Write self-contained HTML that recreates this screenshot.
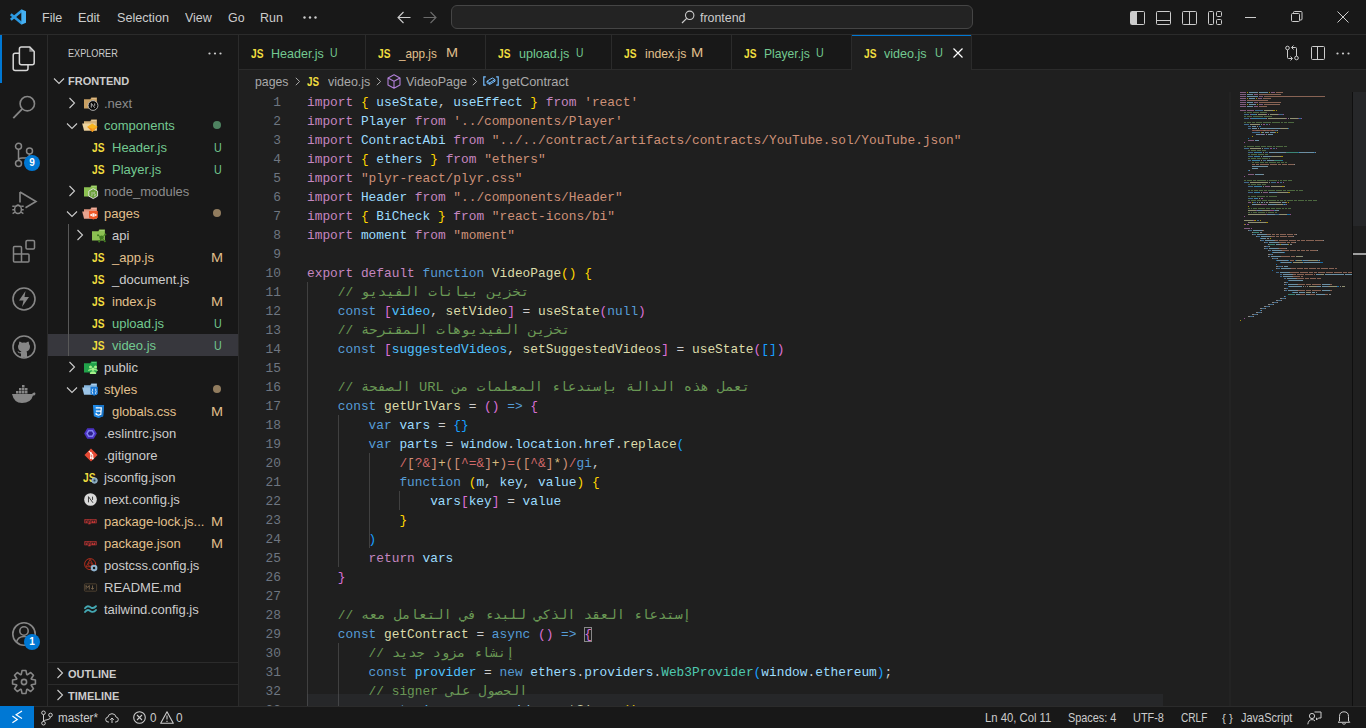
<!DOCTYPE html><html><head><meta charset="utf-8"><style>
*{margin:0;padding:0;box-sizing:border-box}
html,body{width:1366px;height:728px;overflow:hidden;background:#181818;font-family:"Liberation Sans",sans-serif;font-size:13px;color:#cccccc}
.a{position:absolute}
svg{position:absolute;overflow:visible}
.menu{position:absolute;top:10px;font-size:13px;color:#cccccc;white-space:nowrap}
.tab{position:absolute;top:0;height:35px;border-right:1px solid #2b2b2b;border-bottom:1px solid #2b2b2b;background:#181818}
.js{position:absolute;font-weight:bold;font-size:11px;color:#cbcb41;font-family:"Liberation Sans",sans-serif;letter-spacing:-0.2px}
.lbl{position:absolute;top:10px;font-size:13px;white-space:nowrap}
.st{position:absolute;top:4px;font-size:12px;color:#cccccc;white-space:nowrap}
.row{position:absolute;left:0;width:190px;height:22px}
.t{position:absolute;top:4px;white-space:nowrap;font-size:13px}
.g{color:#73c991}.m{color:#e2c08d}.d{color:#8c8c8c}
.code{position:absolute;left:68px;top:23px;font-family:"Liberation Mono",monospace;font-size:12.83px;line-height:19px;white-space:pre;color:#cccccc}
.ln{position:absolute;left:0;top:23px;width:42px;text-align:right;font-family:"Liberation Mono",monospace;font-size:12.83px;line-height:19px;color:#6e7681;white-space:pre}
.k{color:#c586c0}.s{color:#569cd6}.v{color:#9cdcfe}.c{color:#4fc1ff}.f{color:#dcdcaa}.str{color:#ce9178}.cm{color:#6a9955}.y{color:#ffd700}.p{color:#da70d6}.b{color:#179fff}.re{color:#d16969}.cl{color:#4ec9b0}.o{color:#cccccc}
</style></head><body><div class="a" style="left:0;top:0;width:1366px;height:35px;background:#181818;border-bottom:1px solid #2b2b2b"><svg style="left:10px;top:9px" width="16" height="16" viewBox="0 0 16 16"><path d="M12.83 2.6 L11.17 0.6 L-0.03 9.8 L1.63 11.8 Z" fill="#2f9de4"/><path d="M12.83 13.4 L11.17 15.4 L-0.03 6.2 L1.63 4.2 Z" fill="#2b98e0"/><path d="M11.3 0.2 L16 2.3 V13.7 L11.3 15.8 Z" fill="#45b0f2"/></svg><div style="position:absolute;left:42.44px;top:10px;font-size:13px;color:#cccccc;font-weight:normal;white-space:nowrap;transform-origin:0 0;transform:scaleX(0.9636);">File</div><div style="position:absolute;left:77.82px;top:10px;font-size:13px;color:#cccccc;font-weight:normal;white-space:nowrap;transform-origin:0 0;transform:scaleX(0.9776);">Edit</div><div style="position:absolute;left:116.50px;top:10px;font-size:13px;color:#cccccc;font-weight:normal;white-space:nowrap;transform-origin:0 0;transform:scaleX(0.9709);">Selection</div><div style="position:absolute;left:184.60px;top:10px;font-size:13px;color:#cccccc;font-weight:normal;white-space:nowrap;transform-origin:0 0;transform:scaleX(0.9596);">View</div><div style="position:absolute;left:227.80px;top:10px;font-size:13px;color:#cccccc;font-weight:normal;white-space:nowrap;transform-origin:0 0;transform:scaleX(0.9526);">Go</div><div style="position:absolute;left:259.84px;top:10px;font-size:13px;color:#cccccc;font-weight:normal;white-space:nowrap;transform-origin:0 0;transform:scaleX(0.9594);">Run</div><svg style="left:303px;top:16px" width="14" height="3"><circle cx="1.5" cy="1.5" r="1.2" fill="#cccccc"/><circle cx="7" cy="1.5" r="1.2" fill="#cccccc"/><circle cx="12.5" cy="1.5" r="1.2" fill="#cccccc"/></svg><svg style="left:397px;top:11px" width="14" height="13" viewBox="0 0 14 13"><path d="M6.5 1 L1 6.5 L6.5 12 M1 6.5 H13.5" stroke="#cccccc" stroke-width="1.1" fill="none"/></svg><svg style="left:423px;top:11px" width="14" height="13" viewBox="0 0 14 13"><path d="M7.5 1 L13 6.5 L7.5 12 M13 6.5 H0.5" stroke="#6b6b6b" stroke-width="1.1" fill="none"/></svg><div class="a" style="left:451px;top:5px;width:522px;height:24px;border:1px solid #454545;border-radius:6px;background:#232323"></div><svg style="left:681px;top:10px" width="14" height="14" viewBox="0 0 14 14"><circle cx="8.7" cy="5.3" r="4.2" stroke="#cccccc" stroke-width="1.1" fill="none"/><path d="M5.7 8.3 L1 13" stroke="#cccccc" stroke-width="1.2"/></svg><div style="position:absolute;left:700.40px;top:10px;font-size:13px;color:#cccccc;font-weight:normal;white-space:nowrap;transform-origin:0 0;transform:scaleX(0.9542);">frontend</div><svg style="left:1130px;top:10px" width="16" height="16" viewBox="0 0 16 16"><rect x="0.5" y="1.5" width="14" height="13" rx="1" stroke="#cccccc" fill="none"/><rect x="1" y="2" width="6" height="12" fill="#cccccc"/></svg><svg style="left:1156px;top:10px" width="16" height="16" viewBox="0 0 16 16"><rect x="0.5" y="1.5" width="14" height="13" rx="1" stroke="#cccccc" fill="none"/><path d="M1 10.5 H14" stroke="#cccccc"/></svg><svg style="left:1182px;top:10px" width="16" height="16" viewBox="0 0 16 16"><rect x="0.5" y="1.5" width="14" height="13" rx="1" stroke="#cccccc" fill="none"/><path d="M7.5 2 V14" stroke="#cccccc"/></svg><svg style="left:1208px;top:10px" width="16" height="16" viewBox="0 0 16 16"><rect x="0.5" y="1.5" width="5" height="13" rx="1" stroke="#cccccc" fill="none"/><rect x="8.5" y="1.5" width="5" height="5" rx="1" stroke="#cccccc" fill="none"/><rect x="8.5" y="9.5" width="5" height="5" rx="1" stroke="#cccccc" fill="none"/></svg><div class="a" style="left:1245px;top:17px;width:11px;height:1px;background:#cccccc"></div><svg style="left:1291px;top:11px" width="12" height="12" viewBox="0 0 12 12"><rect x="0.5" y="2.5" width="8" height="8" rx="1" stroke="#cccccc" fill="none"/><path d="M2.5 2.5 V1.5 Q2.5 0.5 3.5 0.5 H10 Q11 0.5 11 1.5 V8 Q11 9 10 9 H9" stroke="#cccccc" fill="none"/></svg><svg style="left:1337px;top:11px" width="12" height="12" viewBox="0 0 12 12"><path d="M0.5 0.5 L11.5 11.5 M11.5 0.5 L0.5 11.5" stroke="#cccccc" stroke-width="1"/></svg></div><div class="a" style="left:0;top:35px;width:48px;height:671px;background:#181818;border-right:1px solid #2b2b2b"><div class="a" style="left:0;top:0;width:2px;height:48px;background:#0078d4"></div><svg style="left:12px;top:10px" width="24" height="28" viewBox="0 0 24 28"><path d="M7.4 8.2 H3.2 Q1.2 8.2 1.2 10.2 V23.6 Q1.2 25.6 3.2 25.6 H14 Q16 25.6 16 23.6 V19.8" stroke="#d7d7d7" stroke-width="1.5" fill="none"/><path d="M9.4 1.9 H17.6 L22.2 6.5 V17.8 Q22.2 19.8 20.2 19.8 H9.4 Q7.4 19.8 7.4 17.8 V3.9 Q7.4 1.9 9.4 1.9 Z" stroke="#d7d7d7" stroke-width="1.5" fill="none" stroke-linejoin="round"/><path d="M17.4 2.2 V6.7 H21.9 Z" fill="#d7d7d7" opacity="0.6"/></svg><svg style="left:12px;top:60px" width="24" height="24" viewBox="0 0 24 24"><circle cx="15.3" cy="8.7" r="7.2" stroke="#868686" stroke-width="1.6" fill="none"/><path d="M10.3 13.8 L1.3 23.2" stroke="#868686" stroke-width="1.8"/></svg><svg style="left:12px;top:108px" width="24" height="24" viewBox="0 0 24 24"><circle cx="6.5" cy="3.3" r="3" stroke="#868686" stroke-width="1.5" fill="none"/><circle cx="6.5" cy="20.5" r="3" stroke="#868686" stroke-width="1.5" fill="none"/><circle cx="17.5" cy="8" r="3" stroke="#868686" stroke-width="1.5" fill="none"/><path d="M6.5 6.3 V17.5 M17.5 11 Q17.5 15 13 15 H10 Q6.5 15 6.5 17.5" stroke="#868686" stroke-width="1.5" fill="none"/></svg><div class="a" style="left:24px;top:120px;width:16px;height:16px;border-radius:8px;background:#0078d4;color:#fff;font-size:10px;font-weight:bold;text-align:center;line-height:16px">9</div><svg style="left:12px;top:156px" width="24" height="24" viewBox="0 0 24 24"><path d="M8 1 V11.5 M8 1 L24 10.5 L13.5 16.8" stroke="#868686" stroke-width="1.6" fill="none" stroke-linejoin="miter"/><ellipse cx="6" cy="18.6" rx="3.4" ry="4" stroke="#868686" stroke-width="1.5" fill="none"/><path d="M3.6 15.2 Q6 12.6 8.4 15.2 M0.3 15.3 H2.8 M0.3 18.8 H2.6 M0.6 22.6 L2.9 21.2 M9.2 15.3 H11.7 M9.4 18.8 H11.7 M9.1 21.2 L11.4 22.6" stroke="#868686" stroke-width="1.4" fill="none"/></svg><svg style="left:12px;top:204px" width="24" height="24" viewBox="0 0 24 24"><path d="M2.5 7.5 H8.5 Q9.5 7.5 9.5 8.5 V15 H16 Q17 15 17 16 V22 Q17 23 16 23 H2.5 Q1.5 23 1.5 22 V8.5 Q1.5 7.5 2.5 7.5 Z M1.5 15 H9.5 V23" stroke="#868686" stroke-width="1.5" fill="none"/><rect x="14" y="1.5" width="8.5" height="8.5" rx="1.2" stroke="#868686" stroke-width="1.5" fill="none"/></svg><svg style="left:12px;top:252px" width="24" height="24" viewBox="0 0 24 24"><circle cx="12" cy="12" r="11" stroke="#868686" stroke-width="1.6" fill="none"/><path d="M13.5 4 L7 13.5 H11.5 L10 20 L17 10 H12.5 Z" fill="#868686"/></svg><svg style="left:12px;top:300px" width="24" height="24" viewBox="0 0 24 24"><circle cx="12" cy="12" r="11" stroke="#868686" stroke-width="1.6" fill="none"/><path d="M9 22 V18.5 Q6 18.5 5.5 16 Q7 16.5 7.8 17.5 Q8.5 17 9.5 16.5 Q6 15.5 6 11.5 Q6 10 7 9 Q6.8 7.5 7.5 6.5 Q9 6.8 10 7.7 Q12 7.2 14 7.7 Q15 6.8 16.5 6.5 Q17.2 7.5 17 9 Q18 10 18 11.5 Q18 15.5 14.5 16.5 Q15 17 15 18.5 V22 Z" fill="#868686"/></svg><svg style="left:11px;top:350px" width="26" height="20" viewBox="0 0 26 20"><path d="M1 9 H21 Q22 7 24 7.5 Q25 8.5 24 10 Q23 10.5 22 10.5 Q20 18 11 18 Q3 18 1 9 Z" fill="#868686"/><rect x="5" y="6" width="2.5" height="2.5" fill="#868686"/><rect x="8" y="6" width="2.5" height="2.5" fill="#868686"/><rect x="11" y="6" width="2.5" height="2.5" fill="#868686"/><rect x="14" y="6" width="2.5" height="2.5" fill="#868686"/><rect x="8" y="3" width="2.5" height="2.5" fill="#868686"/><rect x="11" y="3" width="2.5" height="2.5" fill="#868686"/><rect x="14" y="3" width="2.5" height="2.5" fill="#868686"/><rect x="11" y="0" width="2.5" height="2.5" fill="#868686"/></svg><svg style="left:12px;top:587px" width="24" height="24" viewBox="0 0 24 24"><circle cx="12" cy="12" r="11.2" stroke="#868686" stroke-width="1.6" fill="none"/><circle cx="12" cy="9" r="4.2" stroke="#868686" stroke-width="1.6" fill="none"/><path d="M4.5 20 Q6 14.5 12 14.5 Q18 14.5 19.5 20" stroke="#868686" stroke-width="1.6" fill="none"/></svg><div class="a" style="left:24px;top:599px;width:16px;height:16px;border-radius:8px;background:#0078d4;color:#fff;font-size:10px;font-weight:bold;text-align:center;line-height:16px">1</div><svg style="left:12px;top:635px" width="24" height="24" viewBox="0 0 24 24"><path d="M23.43 10.04 L23.43 13.96 L19.39 14.78 L19.20 15.26 L21.47 18.70 L18.70 21.47 L15.26 19.20 L14.78 19.39 L13.96 23.43 L10.04 23.43 L9.22 19.39 L8.74 19.20 L5.30 21.47 L2.53 18.70 L4.80 15.26 L4.61 14.78 L0.57 13.96 L0.57 10.04 L4.61 9.22 L4.80 8.74 L2.53 5.30 L5.30 2.53 L8.74 4.80 L9.22 4.61 L10.04 0.57 L13.96 0.57 L14.78 4.61 L15.26 4.80 L18.70 2.53 L21.47 5.30 L19.20 8.74 L19.39 9.22 Z" stroke="#868686" stroke-width="1.6" fill="none" stroke-linejoin="round"/><circle cx="12" cy="12" r="2.6" stroke="#868686" stroke-width="1.6" fill="none"/></svg></div><div class="a" style="left:48px;top:35px;width:191px;height:671px;background:#181818;border-right:1px solid #2b2b2b"><div style="position:absolute;left:20.20px;top:12px;font-size:11px;color:#cccccc;font-weight:normal;white-space:nowrap;transform-origin:0 0;transform:scaleX(0.8305);">EXPLORER</div><svg style="left:160px;top:17px" width="14" height="3"><circle cx="1.5" cy="1.5" r="1.1" fill="#cccccc"/><circle cx="7" cy="1.5" r="1.1" fill="#cccccc"/><circle cx="12.5" cy="1.5" r="1.1" fill="#cccccc"/></svg><div class="a" style="left:0;top:299px;width:190px;height:22px;background:#37373d"></div><div class="a" style="left:20px;top:189px;width:1px;height:132px;background:#585858"></div><svg style="left:5px;top:42px" width="12" height="8" viewBox="0 0 12 8"><path d="M1 1.5 L6 6.5 L11 1.5" stroke="#cccccc" stroke-width="1.1" fill="none"/></svg><div class="t" style="left:20px;top:40px;font-weight:bold;font-size:11px;color:#cccccc">FRONTEND</div><svg style="left:20px;top:62px" width="8" height="12" viewBox="0 0 8 12"><path d="M1.5 1 L6.5 6 L1.5 11" stroke="#cccccc" stroke-width="1.1" fill="none"/></svg><svg style="left:36px;top:60px" width="16" height="16" viewBox="0 0 16 16"><path d="M0 4.3 H6.3 L7.3 2.5 H12.9 V13.6 H0 Z" fill="#c9a063"/><path d="M7.6 3.6 H12.4" stroke="#e2c08d" stroke-width="0.9"/><circle cx="9" cy="10.5" r="4.9" fill="#0a0a0a" stroke="#cfcfcf" stroke-width="0.8"/><path d="M7.3 12.6 V8.4 L10.8 12.8 M10.7 8.4 V10.8" stroke="#bdbdbd" stroke-width="0.9" fill="none"/></svg><div class="t d" style="left:56px;top:61px">.next</div><svg style="left:18px;top:87px" width="12" height="8" viewBox="0 0 12 8"><path d="M1 1.5 L6 6.5 L11 1.5" stroke="#cccccc" stroke-width="1.1" fill="none"/></svg><svg style="left:36px;top:82px" width="16" height="16" viewBox="0 0 16 16"><path d="M0 4.3 H6.3 L7.3 2.5 H12.9 V13.6 H0 Z" fill="#d4b27a"/><path d="M7.6 3.6 H12.4" stroke="#ead3a6" stroke-width="0.9"/><path d="M-1.8 6.6 H11.2 L12.9 13.6 H0 Z" fill="#ecd3a0"/><path d="M8.2 6.6 L13.6 9.8 L8.4 15 L3.2 9.8 Z" fill="#f6b51e"/><path d="M3.2 9.8 L8.4 15 L8.2 11.8 Z" fill="#f08a1d"/><path d="M8.2 11.8 L13.6 9.8 L8.4 15 Z" fill="#f39b22"/></svg><div class="t g" style="left:56px;top:83px">components</div><div class="a" style="left:165px;top:86px;width:8px;height:8px;border-radius:4px;background:#73c991;opacity:0.6"></div><div style="position:absolute;left:44.00px;top:106px;font-size:12.5px;color:#f1dd3f;font-weight:bold;white-space:nowrap;transform-origin:0 0;transform:scaleX(0.8226);">JS</div><div class="t g" style="left:64px;top:105px">Header.js</div><div style="position:absolute;left:166.30px;top:105.5px;font-size:12.5px;color:#73c991;font-weight:normal;white-space:nowrap;transform-origin:0 0;transform:scaleX(0.8556);">U</div><div style="position:absolute;left:44.00px;top:128px;font-size:12.5px;color:#f1dd3f;font-weight:bold;white-space:nowrap;transform-origin:0 0;transform:scaleX(0.8226);">JS</div><div class="t g" style="left:64px;top:127px">Player.js</div><div style="position:absolute;left:166.30px;top:127.5px;font-size:12.5px;color:#73c991;font-weight:normal;white-space:nowrap;transform-origin:0 0;transform:scaleX(0.8556);">U</div><svg style="left:20px;top:150px" width="8" height="12" viewBox="0 0 8 12"><path d="M1.5 1 L6.5 6 L1.5 11" stroke="#cccccc" stroke-width="1.1" fill="none"/></svg><svg style="left:36px;top:148px" width="16" height="16" viewBox="0 0 16 16"><path d="M0 4.3 H6.3 L7.3 2.5 H12.9 V13.6 H0 Z" fill="#8cc152"/><path d="M7.6 3.6 H12.4" stroke="#a9d47a" stroke-width="0.9"/><path d="M9.2 5.6 L13.6 8.1 V13.1 L9.2 15.6 L4.8 13.1 V8.1 Z" fill="#6a9f3a" stroke="#e6e6e6" stroke-width="0.9"/><path d="M8 9 V12.3 Q8 13 7.3 13 M10.8 9.2 Q9.6 9 9.6 10 Q9.6 10.8 10.6 11 Q11.6 11.2 11.4 12.2 Q11.2 13 10 12.8" stroke="#e6e6e6" stroke-width="0.6" fill="none"/></svg><div class="t d" style="left:56px;top:149px">node_modules</div><svg style="left:18px;top:175px" width="12" height="8" viewBox="0 0 12 8"><path d="M1 1.5 L6 6.5 L11 1.5" stroke="#cccccc" stroke-width="1.1" fill="none"/></svg><svg style="left:36px;top:170px" width="16" height="16" viewBox="0 0 16 16"><path d="M0 4.3 H6.3 L7.3 2.5 H12.9 V13.6 H0 Z" fill="#e0957f"/><path d="M7.6 3.6 H12.4" stroke="#f0b6a4" stroke-width="0.9"/><path d="M-1.8 6.6 H11.2 L12.9 13.6 H0 Z" fill="#e8a48f"/><path d="M5 6 H13.8 V12.8 L9.4 14.6 L5 12.8 Z" fill="#ef5a2a"/><path d="M6.3 10 Q9.4 7.2 12.5 10 Q9.4 12.8 6.3 10 Z" stroke="#fff" stroke-width="0.9" fill="none"/><circle cx="9.4" cy="10" r="0.9" fill="#fff"/></svg><div class="t m" style="left:56px;top:171px">pages</div><div class="a" style="left:165px;top:174px;width:8px;height:8px;border-radius:4px;background:#e2c08d;opacity:0.6"></div><svg style="left:28px;top:194px" width="8" height="12" viewBox="0 0 8 12"><path d="M1.5 1 L6.5 6 L1.5 11" stroke="#cccccc" stroke-width="1.1" fill="none"/></svg><svg style="left:44px;top:192px" width="16" height="16" viewBox="0 0 16 16"><path d="M0 4.3 H6.3 L7.3 2.5 H12.9 V13.6 H0 Z" fill="#8cc152"/><path d="M7.6 3.6 H12.4" stroke="#a9d47a" stroke-width="0.9"/><circle cx="9.6" cy="10.6" r="2.2" fill="#3f7a1f"/><path d="M9.6 10.6 L6 8.2 M9.6 10.6 L13.4 7.4 M9.6 10.6 L12.8 14.2 M9.6 10.6 L7.2 14.6" stroke="#3f7a1f" stroke-width="1"/><circle cx="13.4" cy="7.4" r="1" fill="#3f7a1f"/><circle cx="12.8" cy="14.2" r="1" fill="#3f7a1f"/><circle cx="7.2" cy="14.6" r="1" fill="#3f7a1f"/><circle cx="6" cy="8.2" r="1" fill="#3f7a1f"/></svg><div class="t " style="left:64px;top:193px">api</div><div style="position:absolute;left:44.00px;top:216px;font-size:12.5px;color:#f1dd3f;font-weight:bold;white-space:nowrap;transform-origin:0 0;transform:scaleX(0.8226);">JS</div><div class="t m" style="left:64px;top:215px">_app.js</div><div style="position:absolute;left:162.74px;top:215.5px;font-size:12.5px;color:#e2c08d;font-weight:normal;white-space:nowrap;transform-origin:0 0;transform:scaleX(1.1556);">M</div><div style="position:absolute;left:44.00px;top:238px;font-size:12.5px;color:#f1dd3f;font-weight:bold;white-space:nowrap;transform-origin:0 0;transform:scaleX(0.8226);">JS</div><div class="t " style="left:64px;top:237px">_document.js</div><div style="position:absolute;left:44.00px;top:260px;font-size:12.5px;color:#f1dd3f;font-weight:bold;white-space:nowrap;transform-origin:0 0;transform:scaleX(0.8226);">JS</div><div class="t m" style="left:64px;top:259px">index.js</div><div style="position:absolute;left:162.74px;top:259.5px;font-size:12.5px;color:#e2c08d;font-weight:normal;white-space:nowrap;transform-origin:0 0;transform:scaleX(1.1556);">M</div><div style="position:absolute;left:44.00px;top:282px;font-size:12.5px;color:#f1dd3f;font-weight:bold;white-space:nowrap;transform-origin:0 0;transform:scaleX(0.8226);">JS</div><div class="t g" style="left:64px;top:281px">upload.js</div><div style="position:absolute;left:166.30px;top:281.5px;font-size:12.5px;color:#73c991;font-weight:normal;white-space:nowrap;transform-origin:0 0;transform:scaleX(0.8556);">U</div><div style="position:absolute;left:44.00px;top:304px;font-size:12.5px;color:#f1dd3f;font-weight:bold;white-space:nowrap;transform-origin:0 0;transform:scaleX(0.8226);">JS</div><div class="t g" style="left:64px;top:303px">video.js</div><div style="position:absolute;left:166.30px;top:303.5px;font-size:12.5px;color:#73c991;font-weight:normal;white-space:nowrap;transform-origin:0 0;transform:scaleX(0.8556);">U</div><svg style="left:20px;top:326px" width="8" height="12" viewBox="0 0 8 12"><path d="M1.5 1 L6.5 6 L1.5 11" stroke="#cccccc" stroke-width="1.1" fill="none"/></svg><svg style="left:36px;top:324px" width="16" height="16" viewBox="0 0 16 16"><path d="M0 4.3 H6.3 L7.3 2.5 H12.9 V13.6 H0 Z" fill="#21a24a"/><path d="M7.6 3.6 H12.4" stroke="#5dc878" stroke-width="0.9"/><circle cx="6.5" cy="8" r="1.5" fill="#a5f08b"/><circle cx="11.5" cy="8" r="1.5" fill="#a5f08b"/><circle cx="9" cy="10.2" r="1.7" fill="#a5f08b"/><path d="M4 12 Q4 10 6.5 10 Q8 10 8 11 M14 12 Q14 10 11.5 10 Q10 10 10 11 M5.8 15 Q5.8 12.2 9 12.2 Q12.2 12.2 12.2 15 Z" fill="#a5f08b"/></svg><div class="t " style="left:56px;top:325px">public</div><svg style="left:18px;top:351px" width="12" height="8" viewBox="0 0 12 8"><path d="M1 1.5 L6 6.5 L11 1.5" stroke="#cccccc" stroke-width="1.1" fill="none"/></svg><svg style="left:36px;top:346px" width="16" height="16" viewBox="0 0 16 16"><path d="M0 4.3 H6.3 L7.3 2.5 H12.9 V13.6 H0 Z" fill="#86b6de"/><path d="M7.6 3.6 H12.4" stroke="#b5d3ec" stroke-width="0.9"/><path d="M-1.8 6.6 H11.2 L12.9 13.6 H0 Z" fill="#9cc4e6"/><path d="M6.5 5.8 H13.8 V13 L10.15 14.8 L6.5 13 Z" fill="#1c7ad6"/><path d="M9.2 7.8 Q8.5 7.8 8.5 8.6 V9.8 L8 10.3 L8.5 10.8 V12 Q8.5 12.8 9.2 12.8 M11.1 7.8 Q11.8 7.8 11.8 8.6 V9.8 L12.3 10.3 L11.8 10.8 V12 Q11.8 12.8 11.1 12.8" stroke="#fff" stroke-width="0.8" fill="none"/></svg><div class="t m" style="left:56px;top:347px">styles</div><div class="a" style="left:165px;top:350px;width:8px;height:8px;border-radius:4px;background:#e2c08d;opacity:0.6"></div><svg style="left:44px;top:369px" width="13" height="15" viewBox="0 0 14 16"><path d="M1 1 H13 L12 13 L7 15 L2 13 Z" fill="#1e88e5"/><path d="M7 1 H13 L12 13 L7 15 Z" fill="#1a75c8"/><path d="M4 4 H10 L9.5 11 L7 12 L4.5 11 L4.4 9.5 M4.2 7.5 H9.6" stroke="#fff" stroke-width="1.3" fill="none"/></svg><div class="t m" style="left:64px;top:369px">globals.css</div><div style="position:absolute;left:162.74px;top:369.5px;font-size:12.5px;color:#e2c08d;font-weight:normal;white-space:nowrap;transform-origin:0 0;transform:scaleX(1.1556);">M</div><svg style="left:36px;top:392px" width="13" height="13" viewBox="0 0 16 16"><path d="M4 1.5 H12 L15.8 8 L12 14.5 H4 L0.2 8 Z" fill="#4b32c3"/><path d="M5.3 3.8 H10.7 L13.3 8 L10.7 12.2 H5.3 L2.7 8 Z" fill="#8080f2"/><path d="M6.3 5.5 H9.7 L11.2 8 L9.7 10.5 H6.3 L4.8 8 Z" fill="#2c1f8a"/></svg><div class="t " style="left:56px;top:391px">.eslintrc.json</div><svg style="left:36px;top:413px" width="14" height="14" viewBox="0 0 16 16"><path d="M8 0.5 L15.5 8 L8 15.5 L0.5 8 Z" fill="#e64a35"/><path d="M5.5 3.5 L10 8 V12 M7.8 5.8 V11.5" stroke="#fff" stroke-width="1.2" fill="none"/><circle cx="10" cy="12" r="1.1" fill="#fff"/><circle cx="7.8" cy="11.5" r="1.1" fill="#fff"/><circle cx="7.8" cy="5.8" r="1.1" fill="#fff"/></svg><div class="t " style="left:56px;top:413px">.gitignore</div><div style="position:absolute;left:35.00px;top:436px;font-size:12.5px;color:#f1dd3f;font-weight:bold;white-space:nowrap;transform-origin:0 0;transform:scaleX(0.8226);">JS</div><svg style="left:43px;top:442px" width="7" height="7"><circle cx="3.5" cy="3.5" r="2.8" fill="#7aa0b8" stroke="#a8c3d6" stroke-width="0.8"/><circle cx="3.5" cy="3.5" r="1" fill="#2a3b47"/></svg><div class="t " style="left:56px;top:435px">jsconfig.json</div><svg style="left:36px;top:458px" width="13" height="13" viewBox="0 0 16 16"><circle cx="8" cy="8" r="7.8" fill="#d9d9d9"/><path d="M5.5 11.5 V4.5 L11 12 M10.5 4.5 V8.5" stroke="#3a3a3a" stroke-width="1.2" fill="none"/></svg><div class="t " style="left:56px;top:457px">next.config.js</div><svg style="left:36px;top:480px" width="13" height="13" viewBox="0 0 16 16"><path d="M0.5 5.3 H15.5 V10.3 H8 V11.5 H5 V10.3 H0.5 Z" fill="#cb3837"/><path d="M2 6.5 V9.5 M2 6.5 H4 V9.5 M5.7 6.5 V10.5 M5.7 6.5 H7.5 V9.5 M9 6.5 V9.5 M9 6.5 H14 V9.5 M11.5 6.5 V9" stroke="#181818" stroke-width="0.9" fill="none"/></svg><div class="t m" style="left:56px;top:479px">package-lock.js...</div><div style="position:absolute;left:162.74px;top:479.5px;font-size:12.5px;color:#e2c08d;font-weight:normal;white-space:nowrap;transform-origin:0 0;transform:scaleX(1.1556);">M</div><svg style="left:36px;top:502px" width="13" height="13" viewBox="0 0 16 16"><path d="M0.5 5.3 H15.5 V10.3 H8 V11.5 H5 V10.3 H0.5 Z" fill="#cb3837"/><path d="M2 6.5 V9.5 M2 6.5 H4 V9.5 M5.7 6.5 V10.5 M5.7 6.5 H7.5 V9.5 M9 6.5 V9.5 M9 6.5 H14 V9.5 M11.5 6.5 V9" stroke="#181818" stroke-width="0.9" fill="none"/></svg><div class="t m" style="left:56px;top:501px">package.json</div><div style="position:absolute;left:162.74px;top:501.5px;font-size:12.5px;color:#e2c08d;font-weight:normal;white-space:nowrap;transform-origin:0 0;transform:scaleX(1.1556);">M</div><svg style="left:36px;top:523px" width="14" height="14" viewBox="0 0 16 16"><circle cx="7" cy="7" r="6.3" stroke="#c8301e" stroke-width="1" fill="none"/><path d="M7 1.5 L11.5 10 H2.5 Z" stroke="#c8301e" stroke-width="0.9" fill="none"/><circle cx="7" cy="7.5" r="2" stroke="#c8301e" stroke-width="0.8" fill="none"/><circle cx="11.5" cy="11.5" r="3.8" fill="#8fb3cf"/><circle cx="11.5" cy="11.5" r="1.4" fill="#181818"/></svg><div class="t " style="left:56px;top:523px">postcss.config.js</div><svg style="left:36px;top:546px" width="13" height="13" viewBox="0 0 16 16"><rect x="0.5" y="3.5" width="15" height="9" rx="1" stroke="#5a4a35" fill="none"/><path d="M2.5 10.5 V5.5 L4.5 8 L6.5 5.5 V10.5 M10.5 5.5 V10 M8.8 8.5 L10.5 10.3 L12.2 8.5" stroke="#8a7355" stroke-width="1" fill="none"/></svg><div class="t " style="left:56px;top:545px">README.md</div><svg style="left:36px;top:569px" width="13" height="10" viewBox="0 0 13 10"><path d="M1 4.2 Q3 1.2 5.4 2.6 Q6.5 3.4 7.4 3.8 Q10 4.8 12 2.2 M1 8 Q3 5 5.4 6.4 Q6.5 7.2 7.4 7.6 Q10 8.6 12 6" stroke="#44a8b3" stroke-width="1.9" fill="none" stroke-linecap="round"/></svg><div class="t " style="left:56px;top:567px">tailwind.config.js</div><div class="a" style="left:0;top:627px;width:190px;height:1px;background:#2b2b2b"></div><div class="a" style="left:0;top:649px;width:190px;height:1px;background:#2b2b2b"></div><svg style="left:8px;top:632px" width="8" height="12" viewBox="0 0 8 12"><path d="M1.5 1 L6.5 6 L1.5 11" stroke="#cccccc" stroke-width="1.1" fill="none"/></svg><div class="t" style="left:20px;top:633px;font-weight:bold;font-size:11px">OUTLINE</div><svg style="left:8px;top:654px" width="8" height="12" viewBox="0 0 8 12"><path d="M1.5 1 L6.5 6 L1.5 11" stroke="#cccccc" stroke-width="1.1" fill="none"/></svg><div class="t" style="left:20px;top:655px;font-weight:bold;font-size:11px">TIMELINE</div></div><div class="a" style="left:239px;top:35px;width:1127px;height:35px;background:#181818;border-bottom:1px solid #2b2b2b"><div class="tab" style="left:0px;width:127px;background:#181818;border-bottom:1px solid #2b2b2b"><div style="position:absolute;left:11.90px;top:11.7px;font-size:12.5px;color:#f1dd3f;font-weight:bold;white-space:nowrap;transform-origin:0 0;transform:scaleX(0.8159);">JS</div><div style="position:absolute;left:31.74px;top:10.6px;font-size:13px;color:#73c991;font-weight:normal;white-space:nowrap;transform-origin:0 0;transform:scaleX(0.9629);">Header.js</div><div style="position:absolute;left:90.60px;top:10.6px;font-size:12.5px;color:#73c991;font-weight:normal;white-space:nowrap;transform-origin:0 0;transform:scaleX(0.8333);">U</div></div><div class="tab" style="left:127px;width:120px;background:#181818;border-bottom:1px solid #2b2b2b"><div style="position:absolute;left:12.00px;top:11.7px;font-size:12.5px;color:#f1dd3f;font-weight:bold;white-space:nowrap;transform-origin:0 0;transform:scaleX(0.8159);">JS</div><div style="position:absolute;left:32.70px;top:10.6px;font-size:13px;color:#e2c08d;font-weight:normal;white-space:nowrap;transform-origin:0 0;transform:scaleX(0.9028);">_app.js</div><div style="position:absolute;left:79.74px;top:10.6px;font-size:12.5px;color:#e2c08d;font-weight:normal;white-space:nowrap;transform-origin:0 0;transform:scaleX(1.1556);">M</div></div><div class="tab" style="left:247px;width:126px;background:#181818;border-bottom:1px solid #2b2b2b"><div style="position:absolute;left:11.90px;top:11.7px;font-size:12.5px;color:#f1dd3f;font-weight:bold;white-space:nowrap;transform-origin:0 0;transform:scaleX(0.8159);">JS</div><div style="position:absolute;left:32.90px;top:10.6px;font-size:13px;color:#73c991;font-weight:normal;white-space:nowrap;transform-origin:0 0;transform:scaleX(0.9688);">upload.js</div><div style="position:absolute;left:89.70px;top:10.6px;font-size:12.5px;color:#73c991;font-weight:normal;white-space:nowrap;transform-origin:0 0;transform:scaleX(0.8222);">U</div></div><div class="tab" style="left:373px;width:120px;background:#181818;border-bottom:1px solid #2b2b2b"><div style="position:absolute;left:11.80px;top:11.7px;font-size:12.5px;color:#f1dd3f;font-weight:bold;white-space:nowrap;transform-origin:0 0;transform:scaleX(0.8159);">JS</div><div style="position:absolute;left:32.60px;top:10.6px;font-size:13px;color:#e2c08d;font-weight:normal;white-space:nowrap;transform-origin:0 0;transform:scaleX(0.9377);">index.js</div><div style="position:absolute;left:79.42px;top:10.6px;font-size:12.5px;color:#e2c08d;font-weight:normal;white-space:nowrap;transform-origin:0 0;transform:scaleX(1.1778);">M</div></div><div class="tab" style="left:493px;width:120px;background:#181818;border-bottom:1px solid #2b2b2b"><div style="position:absolute;left:11.80px;top:11.7px;font-size:12.5px;color:#f1dd3f;font-weight:bold;white-space:nowrap;transform-origin:0 0;transform:scaleX(0.8159);">JS</div><div style="position:absolute;left:31.67px;top:10.6px;font-size:13px;color:#73c991;font-weight:normal;white-space:nowrap;transform-origin:0 0;transform:scaleX(0.9336);">Player.js</div><div style="position:absolute;left:83.50px;top:10.6px;font-size:12.5px;color:#73c991;font-weight:normal;white-space:nowrap;transform-origin:0 0;transform:scaleX(0.8556);">U</div></div><div class="tab" style="left:613px;width:120px;background:#1f1f1f;border-bottom:none"><div class="a" style="left:0;top:0;width:119px;height:1px;background:#0078d4"></div><div style="position:absolute;left:11.80px;top:11.7px;font-size:12.5px;color:#f1dd3f;font-weight:bold;white-space:nowrap;transform-origin:0 0;transform:scaleX(0.8159);">JS</div><div style="position:absolute;left:32.40px;top:10.6px;font-size:13px;color:#73c991;font-weight:normal;white-space:nowrap;transform-origin:0 0;transform:scaleX(0.9668);">video.js</div><div style="position:absolute;left:83.40px;top:10.6px;font-size:12.5px;color:#73c991;font-weight:normal;white-space:nowrap;transform-origin:0 0;transform:scaleX(0.8778);">U</div><svg style="left:100.5px;top:13px" width="10" height="10" viewBox="0 0 10 10"><path d="M0.5 0.5 L9.5 9.5 M9.5 0.5 L0.5 9.5" stroke="#ffffff" stroke-width="1.2"/></svg></div><svg style="left:1045px;top:10px" width="16" height="16" viewBox="0 0 16 16"><circle cx="3.5" cy="3" r="1.8" stroke="#cccccc" stroke-width="1" fill="none"/><circle cx="12.5" cy="13" r="1.8" stroke="#cccccc" stroke-width="1" fill="none"/><path d="M3.5 5 V12.5 Q3.5 13.5 4.5 13.5 H8 M6.5 11.5 L8.5 13.5 L6.5 15.5 M12.5 11 V3.5 Q12.5 2.5 11.5 2.5 H8 M9.5 0.5 L7.5 2.5 L9.5 4.5" stroke="#cccccc" stroke-width="1" fill="none"/></svg><svg style="left:1071px;top:10px" width="16" height="16" viewBox="0 0 16 16"><rect x="1.5" y="1.5" width="13" height="13" rx="1" stroke="#cccccc" fill="none"/><path d="M7.5 2 V14" stroke="#cccccc"/></svg><svg style="left:1097px;top:17px" width="14" height="3"><circle cx="1.5" cy="1.5" r="1.1" fill="#cccccc"/><circle cx="7" cy="1.5" r="1.1" fill="#cccccc"/><circle cx="12.5" cy="1.5" r="1.1" fill="#cccccc"/></svg></div><div class="a" style="left:239px;top:70px;width:1127px;height:636px;background:#1f1f1f;overflow:hidden"><div style="position:absolute;left:16.30px;top:4px;font-size:13px;color:#a9a9a9;font-weight:normal;white-space:nowrap;transform-origin:0 0;transform:scaleX(0.9438);">pages</div><svg style="left:56px;top:7px" width="6" height="9" viewBox="0 0 6 9"><path d="M0.8 0.8 L4.6 4.5 L0.8 8.2" stroke="#a9a9a9" stroke-width="1" fill="none"/></svg><div style="position:absolute;left:68.10px;top:5px;font-size:12.5px;color:#f1dd3f;font-weight:bold;white-space:nowrap;transform-origin:0 0;transform:scaleX(0.7892);">JS</div><div style="position:absolute;left:88.60px;top:4px;font-size:13px;color:#a9a9a9;font-weight:normal;white-space:nowrap;transform-origin:0 0;transform:scaleX(0.9601);">video.js</div><svg style="left:137px;top:7px" width="6" height="9" viewBox="0 0 6 9"><path d="M0.8 0.8 L4.6 4.5 L0.8 8.2" stroke="#a9a9a9" stroke-width="1" fill="none"/></svg><svg style="left:148px;top:4px" width="14" height="15" viewBox="0 0 14 15"><path d="M7 0.8 L13 4 V11 L7 14.2 L1 11 V4 Z M1 4 L7 7.3 L13 4 M7 7.3 V14.2" stroke="#b180d7" stroke-width="1.1" fill="none" stroke-linejoin="round"/></svg><div style="position:absolute;left:166.60px;top:4px;font-size:13px;color:#a9a9a9;font-weight:normal;white-space:nowrap;transform-origin:0 0;transform:scaleX(0.9613);">VideoPage</div><svg style="left:233px;top:7px" width="6" height="9" viewBox="0 0 6 9"><path d="M0.8 0.8 L4.6 4.5 L0.8 8.2" stroke="#a9a9a9" stroke-width="1" fill="none"/></svg><svg style="left:244px;top:6px" width="16" height="10" viewBox="0 0 16 10"><path d="M2.8 0.8 H0.8 V9.2 H2.8 M13.2 0.8 H15.2 V9.2 H13.2" stroke="#75beff" stroke-width="1.2" fill="none"/><path d="M4 5.2 L9.3 2 L12 3.6 V5.2 L6.7 8.4 L4 6.8 Z M4 5.2 L6.7 6.8 L12 3.6 M6.7 6.8 V8.4" stroke="#75beff" stroke-width="1" fill="none" stroke-linejoin="round"/></svg><div style="position:absolute;left:263.10px;top:4px;font-size:13px;color:#a9a9a9;font-weight:normal;white-space:nowrap;transform-origin:0 0;transform:scaleX(0.9898);">getContract</div><div class="a" style="left:68px;top:212px;width:1px;height:437px;background:#404040"></div><div class="a" style="left:99px;top:345px;width:1px;height:152px;background:#404040"></div><div class="a" style="left:130px;top:383px;width:1px;height:95px;background:#404040"></div><div class="a" style="left:160px;top:421px;width:1px;height:19px;background:#404040"></div><div class="a" style="left:99px;top:573px;width:1px;height:76px;background:#404040"></div><div class="ln">1
2
3
4
5
6
7
8
9
10
11
12
13
14
15
16
17
18
19
20
21
22
23
24
25
26
27
28
29
30
31
32
33</div><div class="code"><span class="k">import</span><span class="o"> </span><span class="y">{</span><span class="o"> </span><span class="v">useState</span><span class="o">, </span><span class="v">useEffect</span><span class="o"> </span><span class="y">}</span><span class="o"> </span><span class="k">from</span><span class="o"> </span><span class="str">&#x27;react&#x27;</span>
<span class="k">import</span><span class="o"> </span><span class="v">Player</span><span class="o"> </span><span class="k">from</span><span class="o"> </span><span class="str">&#x27;../components/Player&#x27;</span>
<span class="k">import</span><span class="o"> </span><span class="v">ContractAbi</span><span class="o"> </span><span class="k">from</span><span class="o"> </span><span class="str">&quot;../../contract/artifacts/contracts/YouTube.sol/YouTube.json&quot;</span>
<span class="k">import</span><span class="o"> </span><span class="y">{</span><span class="o"> </span><span class="v">ethers</span><span class="o"> </span><span class="y">}</span><span class="o"> </span><span class="k">from</span><span class="o"> </span><span class="str">&quot;ethers&quot;</span>
<span class="k">import</span><span class="o"> </span><span class="str">&quot;plyr-react/plyr.css&quot;</span>
<span class="k">import</span><span class="o"> </span><span class="v">Header</span><span class="o"> </span><span class="k">from</span><span class="o"> </span><span class="str">&quot;../components/Header&quot;</span>
<span class="k">import</span><span class="o"> </span><span class="y">{</span><span class="o"> </span><span class="v">BiCheck</span><span class="o"> </span><span class="y">}</span><span class="o"> </span><span class="k">from</span><span class="o"> </span><span class="str">&quot;react-icons/bi&quot;</span>
<span class="k">import</span><span class="o"> </span><span class="v">moment</span><span class="o"> </span><span class="k">from</span><span class="o"> </span><span class="str">&quot;moment&quot;</span>

<span class="k">export</span><span class="o"> </span><span class="k">default</span><span class="o"> </span><span class="s">function</span><span class="o"> </span><span class="f">VideoPage</span><span class="y">()</span><span class="o"> </span><span class="y">{</span>
<span class="o">    </span><span class="cm">// </span><span id="ar10" class="cm" style="display:inline-block;direction:rtl;transform-origin:0 0;transform:scaleX(1.0885)">تخزين بيانات الفيديو</span>
<span class="o">    </span><span class="s">const</span><span class="o"> </span><span class="p">[</span><span class="c">video</span><span class="o">, </span><span class="f">setVideo</span><span class="p">]</span><span class="o"> = </span><span class="f">useState</span><span class="p">(</span><span class="s">null</span><span class="p">)</span>
<span class="o">    </span><span class="cm">// </span><span id="ar12" class="cm" style="display:inline-block;direction:rtl;transform-origin:0 0;transform:scaleX(1.0832)">تخزين الفيديوهات المقترحة</span>
<span class="o">    </span><span class="s">const</span><span class="o"> </span><span class="p">[</span><span class="c">suggestedVideos</span><span class="o">, </span><span class="f">setSuggestedVideos</span><span class="p">]</span><span class="o"> = </span><span class="f">useState</span><span class="p">(</span><span class="b">[]</span><span class="p">)</span>

<span class="o">    </span><span class="cm">// </span><span id="ar15" class="cm" style="display:inline-block;direction:rtl;transform-origin:0 0;transform:scaleX(1.0726)">تعمل هذه الدالة بإستدعاء المعلمات من URL الصفحة</span>
<span class="o">    </span><span class="s">const</span><span class="o"> </span><span class="f">getUrlVars</span><span class="o"> = </span><span class="p">()</span><span class="o"> </span><span class="s">=&gt;</span><span class="o"> </span><span class="p">{</span>
<span class="o">        </span><span class="s">var</span><span class="o"> </span><span class="v">vars</span><span class="o"> = </span><span class="b">{}</span>
<span class="o">        </span><span class="s">var</span><span class="o"> </span><span class="v">parts</span><span class="o"> = </span><span class="v">window</span><span class="o">.</span><span class="v">location</span><span class="o">.</span><span class="v">href</span><span class="o">.</span><span class="f">replace</span><span class="b">(</span>
<span class="o">            </span><span class="re">/</span><span style="color:#ce9178">[</span><span class="re">?&amp;</span><span style="color:#ce9178">]</span><span style="color:#d7ba7d">+</span><span style="color:#ce9178">([</span><span class="re">^=&amp;</span><span style="color:#ce9178">]</span><span style="color:#d7ba7d">+</span><span style="color:#ce9178">)</span><span class="re">=</span><span style="color:#ce9178">([</span><span class="re">^&amp;</span><span style="color:#ce9178">]</span><span style="color:#d7ba7d">*</span><span style="color:#ce9178">)</span><span class="re">/</span><span class="s">gi</span><span class="o">,</span>
<span class="o">            </span><span class="s">function</span><span class="o"> </span><span class="y">(</span><span class="v">m</span><span class="o">, </span><span class="v">key</span><span class="o">, </span><span class="v">value</span><span class="y">)</span><span class="o"> </span><span class="y">{</span>
<span class="o">                </span><span class="v">vars</span><span class="p">[</span><span class="v">key</span><span class="p">]</span><span class="o"> = </span><span class="v">value</span>
<span class="o">            </span><span class="y">}</span>
<span class="o">        </span><span class="b">)</span>
<span class="o">        </span><span class="k">return</span><span class="o"> </span><span class="v">vars</span>
<span class="o">    </span><span class="p">}</span>

<span class="o">    </span><span class="cm">// </span><span id="ar27" class="cm" style="display:inline-block;direction:rtl;transform-origin:0 0;transform:scaleX(1.0690)">إستدعاء العقد الذكي للبدء في التعامل معه</span>
<span class="o">    </span><span class="s">const</span><span class="o"> </span><span class="f">getContract</span><span class="o"> = </span><span class="s">async</span><span class="o"> </span><span class="p">()</span><span class="o"> </span><span class="s">=&gt;</span><span class="o"> </span><span class="p" style="outline:1px solid #888;outline-offset:-1px">{</span>
<span class="o">        </span><span class="cm">// </span><span id="ar29" class="cm" style="display:inline-block;direction:rtl;transform-origin:0 0;transform:scaleX(1.0560)">إنشاء مزود جديد</span>
<span class="o">        </span><span class="s">const</span><span class="o"> </span><span class="c">provider</span><span class="o"> = </span><span class="s">new</span><span class="o"> </span><span class="v">ethers</span><span class="o">.</span><span class="v">providers</span><span class="o">.</span><span class="cl">Web3Provider</span><span class="b">(</span><span class="v">window</span><span class="o">.</span><span class="v">ethereum</span><span class="b">)</span><span class="o">;</span>
<span class="o">        </span><span class="cm">// signer </span><span id="ar31" class="cm" style="display:inline-block;direction:rtl;transform-origin:0 0;transform:scaleX(1.0544)">الحصول على</span>
<span class="o">        </span><span class="s">const</span><span class="o"> </span><span class="c">signer</span><span class="o"> = </span><span class="v">provider</span><span class="o">.</span><span class="f">getSigner</span><span class="y">()</span></div><div class="a" style="left:1001px;top:22px;width:112px;height:240px;opacity:0.6"><div style="position:absolute;left:0px;top:0px;width:6px;height:2px;background:linear-gradient(#c586c0 55%,transparent 55%)"></div><div style="position:absolute;left:7px;top:0px;width:1px;height:2px;background:linear-gradient(#ffd700 55%,transparent 55%)"></div><div style="position:absolute;left:9px;top:0px;width:8px;height:2px;background:linear-gradient(#9cdcfe 55%,transparent 55%)"></div><div style="position:absolute;left:17px;top:0px;width:1px;height:2px;background:linear-gradient(#cccccc 55%,transparent 55%)"></div><div style="position:absolute;left:19px;top:0px;width:9px;height:2px;background:linear-gradient(#9cdcfe 55%,transparent 55%)"></div><div style="position:absolute;left:29px;top:0px;width:1px;height:2px;background:linear-gradient(#ffd700 55%,transparent 55%)"></div><div style="position:absolute;left:31px;top:0px;width:4px;height:2px;background:linear-gradient(#c586c0 55%,transparent 55%)"></div><div style="position:absolute;left:36px;top:0px;width:7px;height:2px;background:linear-gradient(#ce9178 55%,transparent 55%)"></div><div style="position:absolute;left:0px;top:2px;width:6px;height:2px;background:linear-gradient(#c586c0 55%,transparent 55%)"></div><div style="position:absolute;left:7px;top:2px;width:6px;height:2px;background:linear-gradient(#9cdcfe 55%,transparent 55%)"></div><div style="position:absolute;left:14px;top:2px;width:4px;height:2px;background:linear-gradient(#c586c0 55%,transparent 55%)"></div><div style="position:absolute;left:19px;top:2px;width:22px;height:2px;background:linear-gradient(#ce9178 55%,transparent 55%)"></div><div style="position:absolute;left:0px;top:4px;width:6px;height:2px;background:linear-gradient(#c586c0 55%,transparent 55%)"></div><div style="position:absolute;left:7px;top:4px;width:11px;height:2px;background:linear-gradient(#9cdcfe 55%,transparent 55%)"></div><div style="position:absolute;left:19px;top:4px;width:4px;height:2px;background:linear-gradient(#c586c0 55%,transparent 55%)"></div><div style="position:absolute;left:24px;top:4px;width:61px;height:2px;background:linear-gradient(#ce9178 55%,transparent 55%)"></div><div style="position:absolute;left:0px;top:6px;width:6px;height:2px;background:linear-gradient(#c586c0 55%,transparent 55%)"></div><div style="position:absolute;left:7px;top:6px;width:1px;height:2px;background:linear-gradient(#ffd700 55%,transparent 55%)"></div><div style="position:absolute;left:9px;top:6px;width:6px;height:2px;background:linear-gradient(#9cdcfe 55%,transparent 55%)"></div><div style="position:absolute;left:16px;top:6px;width:1px;height:2px;background:linear-gradient(#ffd700 55%,transparent 55%)"></div><div style="position:absolute;left:18px;top:6px;width:4px;height:2px;background:linear-gradient(#c586c0 55%,transparent 55%)"></div><div style="position:absolute;left:23px;top:6px;width:8px;height:2px;background:linear-gradient(#ce9178 55%,transparent 55%)"></div><div style="position:absolute;left:0px;top:8px;width:6px;height:2px;background:linear-gradient(#c586c0 55%,transparent 55%)"></div><div style="position:absolute;left:7px;top:8px;width:21px;height:2px;background:linear-gradient(#ce9178 55%,transparent 55%)"></div><div style="position:absolute;left:0px;top:10px;width:6px;height:2px;background:linear-gradient(#c586c0 55%,transparent 55%)"></div><div style="position:absolute;left:7px;top:10px;width:6px;height:2px;background:linear-gradient(#9cdcfe 55%,transparent 55%)"></div><div style="position:absolute;left:14px;top:10px;width:4px;height:2px;background:linear-gradient(#c586c0 55%,transparent 55%)"></div><div style="position:absolute;left:19px;top:10px;width:22px;height:2px;background:linear-gradient(#ce9178 55%,transparent 55%)"></div><div style="position:absolute;left:0px;top:12px;width:6px;height:2px;background:linear-gradient(#c586c0 55%,transparent 55%)"></div><div style="position:absolute;left:7px;top:12px;width:1px;height:2px;background:linear-gradient(#ffd700 55%,transparent 55%)"></div><div style="position:absolute;left:9px;top:12px;width:7px;height:2px;background:linear-gradient(#9cdcfe 55%,transparent 55%)"></div><div style="position:absolute;left:17px;top:12px;width:1px;height:2px;background:linear-gradient(#ffd700 55%,transparent 55%)"></div><div style="position:absolute;left:19px;top:12px;width:4px;height:2px;background:linear-gradient(#c586c0 55%,transparent 55%)"></div><div style="position:absolute;left:24px;top:12px;width:16px;height:2px;background:linear-gradient(#ce9178 55%,transparent 55%)"></div><div style="position:absolute;left:0px;top:14px;width:6px;height:2px;background:linear-gradient(#c586c0 55%,transparent 55%)"></div><div style="position:absolute;left:7px;top:14px;width:6px;height:2px;background:linear-gradient(#9cdcfe 55%,transparent 55%)"></div><div style="position:absolute;left:14px;top:14px;width:4px;height:2px;background:linear-gradient(#c586c0 55%,transparent 55%)"></div><div style="position:absolute;left:19px;top:14px;width:8px;height:2px;background:linear-gradient(#ce9178 55%,transparent 55%)"></div><div style="position:absolute;left:0px;top:18px;width:6px;height:2px;background:linear-gradient(#c586c0 55%,transparent 55%)"></div><div style="position:absolute;left:7px;top:18px;width:7px;height:2px;background:linear-gradient(#c586c0 55%,transparent 55%)"></div><div style="position:absolute;left:15px;top:18px;width:8px;height:2px;background:linear-gradient(#569cd6 55%,transparent 55%)"></div><div style="position:absolute;left:24px;top:18px;width:9px;height:2px;background:linear-gradient(#dcdcaa 55%,transparent 55%)"></div><div style="position:absolute;left:33px;top:18px;width:2px;height:2px;background:linear-gradient(#ffd700 55%,transparent 55%)"></div><div style="position:absolute;left:36px;top:18px;width:1px;height:2px;background:linear-gradient(#ffd700 55%,transparent 55%)"></div><div style="position:absolute;left:4px;top:20px;width:2px;height:2px;background:linear-gradient(#6a9955 55%,transparent 55%)"></div><div style="position:absolute;left:7px;top:20px;width:5px;height:2px;background:linear-gradient(#6a9955 55%,transparent 55%)"></div><div style="position:absolute;left:13px;top:20px;width:6px;height:2px;background:linear-gradient(#6a9955 55%,transparent 55%)"></div><div style="position:absolute;left:20px;top:20px;width:7px;height:2px;background:linear-gradient(#6a9955 55%,transparent 55%)"></div><div style="position:absolute;left:4px;top:22px;width:5px;height:2px;background:linear-gradient(#569cd6 55%,transparent 55%)"></div><div style="position:absolute;left:10px;top:22px;width:1px;height:2px;background:linear-gradient(#da70d6 55%,transparent 55%)"></div><div style="position:absolute;left:11px;top:22px;width:5px;height:2px;background:linear-gradient(#4fc1ff 55%,transparent 55%)"></div><div style="position:absolute;left:16px;top:22px;width:1px;height:2px;background:linear-gradient(#cccccc 55%,transparent 55%)"></div><div style="position:absolute;left:18px;top:22px;width:8px;height:2px;background:linear-gradient(#dcdcaa 55%,transparent 55%)"></div><div style="position:absolute;left:26px;top:22px;width:1px;height:2px;background:linear-gradient(#da70d6 55%,transparent 55%)"></div><div style="position:absolute;left:28px;top:22px;width:1px;height:2px;background:linear-gradient(#cccccc 55%,transparent 55%)"></div><div style="position:absolute;left:30px;top:22px;width:8px;height:2px;background:linear-gradient(#dcdcaa 55%,transparent 55%)"></div><div style="position:absolute;left:38px;top:22px;width:1px;height:2px;background:linear-gradient(#da70d6 55%,transparent 55%)"></div><div style="position:absolute;left:39px;top:22px;width:4px;height:2px;background:linear-gradient(#569cd6 55%,transparent 55%)"></div><div style="position:absolute;left:43px;top:22px;width:1px;height:2px;background:linear-gradient(#da70d6 55%,transparent 55%)"></div><div style="position:absolute;left:4px;top:24px;width:2px;height:2px;background:linear-gradient(#6a9955 55%,transparent 55%)"></div><div style="position:absolute;left:7px;top:24px;width:5px;height:2px;background:linear-gradient(#6a9955 55%,transparent 55%)"></div><div style="position:absolute;left:13px;top:24px;width:10px;height:2px;background:linear-gradient(#6a9955 55%,transparent 55%)"></div><div style="position:absolute;left:24px;top:24px;width:8px;height:2px;background:linear-gradient(#6a9955 55%,transparent 55%)"></div><div style="position:absolute;left:4px;top:26px;width:5px;height:2px;background:linear-gradient(#569cd6 55%,transparent 55%)"></div><div style="position:absolute;left:10px;top:26px;width:1px;height:2px;background:linear-gradient(#da70d6 55%,transparent 55%)"></div><div style="position:absolute;left:11px;top:26px;width:15px;height:2px;background:linear-gradient(#4fc1ff 55%,transparent 55%)"></div><div style="position:absolute;left:26px;top:26px;width:1px;height:2px;background:linear-gradient(#cccccc 55%,transparent 55%)"></div><div style="position:absolute;left:28px;top:26px;width:18px;height:2px;background:linear-gradient(#dcdcaa 55%,transparent 55%)"></div><div style="position:absolute;left:46px;top:26px;width:1px;height:2px;background:linear-gradient(#da70d6 55%,transparent 55%)"></div><div style="position:absolute;left:48px;top:26px;width:1px;height:2px;background:linear-gradient(#cccccc 55%,transparent 55%)"></div><div style="position:absolute;left:50px;top:26px;width:8px;height:2px;background:linear-gradient(#dcdcaa 55%,transparent 55%)"></div><div style="position:absolute;left:58px;top:26px;width:1px;height:2px;background:linear-gradient(#da70d6 55%,transparent 55%)"></div><div style="position:absolute;left:59px;top:26px;width:2px;height:2px;background:linear-gradient(#179fff 55%,transparent 55%)"></div><div style="position:absolute;left:61px;top:26px;width:1px;height:2px;background:linear-gradient(#da70d6 55%,transparent 55%)"></div><div style="position:absolute;left:4px;top:30px;width:2px;height:2px;background:linear-gradient(#6a9955 55%,transparent 55%)"></div><div style="position:absolute;left:7px;top:30px;width:4px;height:2px;background:linear-gradient(#6a9955 55%,transparent 55%)"></div><div style="position:absolute;left:12px;top:30px;width:3px;height:2px;background:linear-gradient(#6a9955 55%,transparent 55%)"></div><div style="position:absolute;left:16px;top:30px;width:6px;height:2px;background:linear-gradient(#6a9955 55%,transparent 55%)"></div><div style="position:absolute;left:23px;top:30px;width:8px;height:2px;background:linear-gradient(#6a9955 55%,transparent 55%)"></div><div style="position:absolute;left:32px;top:30px;width:8px;height:2px;background:linear-gradient(#6a9955 55%,transparent 55%)"></div><div style="position:absolute;left:41px;top:30px;width:2px;height:2px;background:linear-gradient(#6a9955 55%,transparent 55%)"></div><div style="position:absolute;left:44px;top:30px;width:3px;height:2px;background:linear-gradient(#6a9955 55%,transparent 55%)"></div><div style="position:absolute;left:48px;top:30px;width:6px;height:2px;background:linear-gradient(#6a9955 55%,transparent 55%)"></div><div style="position:absolute;left:4px;top:32px;width:5px;height:2px;background:linear-gradient(#569cd6 55%,transparent 55%)"></div><div style="position:absolute;left:10px;top:32px;width:10px;height:2px;background:linear-gradient(#dcdcaa 55%,transparent 55%)"></div><div style="position:absolute;left:21px;top:32px;width:1px;height:2px;background:linear-gradient(#cccccc 55%,transparent 55%)"></div><div style="position:absolute;left:23px;top:32px;width:2px;height:2px;background:linear-gradient(#da70d6 55%,transparent 55%)"></div><div style="position:absolute;left:26px;top:32px;width:2px;height:2px;background:linear-gradient(#569cd6 55%,transparent 55%)"></div><div style="position:absolute;left:29px;top:32px;width:1px;height:2px;background:linear-gradient(#da70d6 55%,transparent 55%)"></div><div style="position:absolute;left:8px;top:34px;width:3px;height:2px;background:linear-gradient(#569cd6 55%,transparent 55%)"></div><div style="position:absolute;left:12px;top:34px;width:4px;height:2px;background:linear-gradient(#9cdcfe 55%,transparent 55%)"></div><div style="position:absolute;left:17px;top:34px;width:1px;height:2px;background:linear-gradient(#cccccc 55%,transparent 55%)"></div><div style="position:absolute;left:19px;top:34px;width:2px;height:2px;background:linear-gradient(#179fff 55%,transparent 55%)"></div><div style="position:absolute;left:8px;top:36px;width:3px;height:2px;background:linear-gradient(#569cd6 55%,transparent 55%)"></div><div style="position:absolute;left:12px;top:36px;width:5px;height:2px;background:linear-gradient(#9cdcfe 55%,transparent 55%)"></div><div style="position:absolute;left:18px;top:36px;width:1px;height:2px;background:linear-gradient(#cccccc 55%,transparent 55%)"></div><div style="position:absolute;left:20px;top:36px;width:6px;height:2px;background:linear-gradient(#9cdcfe 55%,transparent 55%)"></div><div style="position:absolute;left:26px;top:36px;width:1px;height:2px;background:linear-gradient(#cccccc 55%,transparent 55%)"></div><div style="position:absolute;left:27px;top:36px;width:8px;height:2px;background:linear-gradient(#9cdcfe 55%,transparent 55%)"></div><div style="position:absolute;left:35px;top:36px;width:1px;height:2px;background:linear-gradient(#cccccc 55%,transparent 55%)"></div><div style="position:absolute;left:36px;top:36px;width:4px;height:2px;background:linear-gradient(#9cdcfe 55%,transparent 55%)"></div><div style="position:absolute;left:40px;top:36px;width:1px;height:2px;background:linear-gradient(#cccccc 55%,transparent 55%)"></div><div style="position:absolute;left:41px;top:36px;width:7px;height:2px;background:linear-gradient(#dcdcaa 55%,transparent 55%)"></div><div style="position:absolute;left:48px;top:36px;width:1px;height:2px;background:linear-gradient(#179fff 55%,transparent 55%)"></div><div style="position:absolute;left:12px;top:38px;width:1px;height:2px;background:linear-gradient(#d16969 55%,transparent 55%)"></div><div style="position:absolute;left:13px;top:38px;width:1px;height:2px;background:linear-gradient(#ce9178 55%,transparent 55%)"></div><div style="position:absolute;left:14px;top:38px;width:2px;height:2px;background:linear-gradient(#d16969 55%,transparent 55%)"></div><div style="position:absolute;left:16px;top:38px;width:1px;height:2px;background:linear-gradient(#ce9178 55%,transparent 55%)"></div><div style="position:absolute;left:17px;top:38px;width:1px;height:2px;background:linear-gradient(#d7ba7d 55%,transparent 55%)"></div><div style="position:absolute;left:18px;top:38px;width:2px;height:2px;background:linear-gradient(#ce9178 55%,transparent 55%)"></div><div style="position:absolute;left:20px;top:38px;width:3px;height:2px;background:linear-gradient(#d16969 55%,transparent 55%)"></div><div style="position:absolute;left:23px;top:38px;width:1px;height:2px;background:linear-gradient(#ce9178 55%,transparent 55%)"></div><div style="position:absolute;left:24px;top:38px;width:1px;height:2px;background:linear-gradient(#d7ba7d 55%,transparent 55%)"></div><div style="position:absolute;left:25px;top:38px;width:1px;height:2px;background:linear-gradient(#ce9178 55%,transparent 55%)"></div><div style="position:absolute;left:26px;top:38px;width:1px;height:2px;background:linear-gradient(#d16969 55%,transparent 55%)"></div><div style="position:absolute;left:27px;top:38px;width:2px;height:2px;background:linear-gradient(#ce9178 55%,transparent 55%)"></div><div style="position:absolute;left:29px;top:38px;width:2px;height:2px;background:linear-gradient(#d16969 55%,transparent 55%)"></div><div style="position:absolute;left:31px;top:38px;width:1px;height:2px;background:linear-gradient(#ce9178 55%,transparent 55%)"></div><div style="position:absolute;left:32px;top:38px;width:1px;height:2px;background:linear-gradient(#d7ba7d 55%,transparent 55%)"></div><div style="position:absolute;left:33px;top:38px;width:1px;height:2px;background:linear-gradient(#ce9178 55%,transparent 55%)"></div><div style="position:absolute;left:34px;top:38px;width:1px;height:2px;background:linear-gradient(#d16969 55%,transparent 55%)"></div><div style="position:absolute;left:35px;top:38px;width:2px;height:2px;background:linear-gradient(#569cd6 55%,transparent 55%)"></div><div style="position:absolute;left:37px;top:38px;width:1px;height:2px;background:linear-gradient(#cccccc 55%,transparent 55%)"></div><div style="position:absolute;left:12px;top:40px;width:8px;height:2px;background:linear-gradient(#569cd6 55%,transparent 55%)"></div><div style="position:absolute;left:21px;top:40px;width:1px;height:2px;background:linear-gradient(#ffd700 55%,transparent 55%)"></div><div style="position:absolute;left:22px;top:40px;width:1px;height:2px;background:linear-gradient(#9cdcfe 55%,transparent 55%)"></div><div style="position:absolute;left:23px;top:40px;width:1px;height:2px;background:linear-gradient(#cccccc 55%,transparent 55%)"></div><div style="position:absolute;left:25px;top:40px;width:3px;height:2px;background:linear-gradient(#9cdcfe 55%,transparent 55%)"></div><div style="position:absolute;left:28px;top:40px;width:1px;height:2px;background:linear-gradient(#cccccc 55%,transparent 55%)"></div><div style="position:absolute;left:30px;top:40px;width:5px;height:2px;background:linear-gradient(#9cdcfe 55%,transparent 55%)"></div><div style="position:absolute;left:35px;top:40px;width:1px;height:2px;background:linear-gradient(#ffd700 55%,transparent 55%)"></div><div style="position:absolute;left:37px;top:40px;width:1px;height:2px;background:linear-gradient(#ffd700 55%,transparent 55%)"></div><div style="position:absolute;left:16px;top:42px;width:4px;height:2px;background:linear-gradient(#9cdcfe 55%,transparent 55%)"></div><div style="position:absolute;left:20px;top:42px;width:1px;height:2px;background:linear-gradient(#da70d6 55%,transparent 55%)"></div><div style="position:absolute;left:21px;top:42px;width:3px;height:2px;background:linear-gradient(#9cdcfe 55%,transparent 55%)"></div><div style="position:absolute;left:24px;top:42px;width:1px;height:2px;background:linear-gradient(#da70d6 55%,transparent 55%)"></div><div style="position:absolute;left:26px;top:42px;width:1px;height:2px;background:linear-gradient(#cccccc 55%,transparent 55%)"></div><div style="position:absolute;left:28px;top:42px;width:5px;height:2px;background:linear-gradient(#9cdcfe 55%,transparent 55%)"></div><div style="position:absolute;left:12px;top:44px;width:1px;height:2px;background:linear-gradient(#ffd700 55%,transparent 55%)"></div><div style="position:absolute;left:8px;top:46px;width:1px;height:2px;background:linear-gradient(#179fff 55%,transparent 55%)"></div><div style="position:absolute;left:8px;top:48px;width:6px;height:2px;background:linear-gradient(#c586c0 55%,transparent 55%)"></div><div style="position:absolute;left:15px;top:48px;width:4px;height:2px;background:linear-gradient(#9cdcfe 55%,transparent 55%)"></div><div style="position:absolute;left:4px;top:50px;width:1px;height:2px;background:linear-gradient(#da70d6 55%,transparent 55%)"></div><div style="position:absolute;left:4px;top:54px;width:2px;height:2px;background:linear-gradient(#6a9955 55%,transparent 55%)"></div><div style="position:absolute;left:7px;top:54px;width:7px;height:2px;background:linear-gradient(#6a9955 55%,transparent 55%)"></div><div style="position:absolute;left:15px;top:54px;width:5px;height:2px;background:linear-gradient(#6a9955 55%,transparent 55%)"></div><div style="position:absolute;left:21px;top:54px;width:5px;height:2px;background:linear-gradient(#6a9955 55%,transparent 55%)"></div><div style="position:absolute;left:27px;top:54px;width:5px;height:2px;background:linear-gradient(#6a9955 55%,transparent 55%)"></div><div style="position:absolute;left:33px;top:54px;width:2px;height:2px;background:linear-gradient(#6a9955 55%,transparent 55%)"></div><div style="position:absolute;left:36px;top:54px;width:7px;height:2px;background:linear-gradient(#6a9955 55%,transparent 55%)"></div><div style="position:absolute;left:44px;top:54px;width:3px;height:2px;background:linear-gradient(#6a9955 55%,transparent 55%)"></div><div style="position:absolute;left:4px;top:56px;width:5px;height:2px;background:linear-gradient(#569cd6 55%,transparent 55%)"></div><div style="position:absolute;left:10px;top:56px;width:11px;height:2px;background:linear-gradient(#dcdcaa 55%,transparent 55%)"></div><div style="position:absolute;left:22px;top:56px;width:1px;height:2px;background:linear-gradient(#cccccc 55%,transparent 55%)"></div><div style="position:absolute;left:24px;top:56px;width:5px;height:2px;background:linear-gradient(#569cd6 55%,transparent 55%)"></div><div style="position:absolute;left:30px;top:56px;width:2px;height:2px;background:linear-gradient(#da70d6 55%,transparent 55%)"></div><div style="position:absolute;left:33px;top:56px;width:2px;height:2px;background:linear-gradient(#569cd6 55%,transparent 55%)"></div><div style="position:absolute;left:36px;top:56px;width:1px;height:2px;background:linear-gradient(#da70d6 55%,transparent 55%)"></div><div style="position:absolute;left:8px;top:58px;width:2px;height:2px;background:linear-gradient(#6a9955 55%,transparent 55%)"></div><div style="position:absolute;left:11px;top:58px;width:5px;height:2px;background:linear-gradient(#6a9955 55%,transparent 55%)"></div><div style="position:absolute;left:17px;top:58px;width:4px;height:2px;background:linear-gradient(#6a9955 55%,transparent 55%)"></div><div style="position:absolute;left:22px;top:58px;width:4px;height:2px;background:linear-gradient(#6a9955 55%,transparent 55%)"></div><div style="position:absolute;left:8px;top:60px;width:5px;height:2px;background:linear-gradient(#569cd6 55%,transparent 55%)"></div><div style="position:absolute;left:14px;top:60px;width:8px;height:2px;background:linear-gradient(#4fc1ff 55%,transparent 55%)"></div><div style="position:absolute;left:23px;top:60px;width:1px;height:2px;background:linear-gradient(#cccccc 55%,transparent 55%)"></div><div style="position:absolute;left:25px;top:60px;width:3px;height:2px;background:linear-gradient(#569cd6 55%,transparent 55%)"></div><div style="position:absolute;left:29px;top:60px;width:6px;height:2px;background:linear-gradient(#9cdcfe 55%,transparent 55%)"></div><div style="position:absolute;left:35px;top:60px;width:1px;height:2px;background:linear-gradient(#cccccc 55%,transparent 55%)"></div><div style="position:absolute;left:36px;top:60px;width:9px;height:2px;background:linear-gradient(#9cdcfe 55%,transparent 55%)"></div><div style="position:absolute;left:45px;top:60px;width:1px;height:2px;background:linear-gradient(#cccccc 55%,transparent 55%)"></div><div style="position:absolute;left:46px;top:60px;width:12px;height:2px;background:linear-gradient(#4ec9b0 55%,transparent 55%)"></div><div style="position:absolute;left:58px;top:60px;width:1px;height:2px;background:linear-gradient(#179fff 55%,transparent 55%)"></div><div style="position:absolute;left:59px;top:60px;width:6px;height:2px;background:linear-gradient(#9cdcfe 55%,transparent 55%)"></div><div style="position:absolute;left:65px;top:60px;width:1px;height:2px;background:linear-gradient(#cccccc 55%,transparent 55%)"></div><div style="position:absolute;left:66px;top:60px;width:8px;height:2px;background:linear-gradient(#9cdcfe 55%,transparent 55%)"></div><div style="position:absolute;left:74px;top:60px;width:1px;height:2px;background:linear-gradient(#179fff 55%,transparent 55%)"></div><div style="position:absolute;left:75px;top:60px;width:1px;height:2px;background:linear-gradient(#cccccc 55%,transparent 55%)"></div><div style="position:absolute;left:8px;top:62px;width:2px;height:2px;background:linear-gradient(#6a9955 55%,transparent 55%)"></div><div style="position:absolute;left:11px;top:62px;width:6px;height:2px;background:linear-gradient(#6a9955 55%,transparent 55%)"></div><div style="position:absolute;left:18px;top:62px;width:6px;height:2px;background:linear-gradient(#6a9955 55%,transparent 55%)"></div><div style="position:absolute;left:25px;top:62px;width:3px;height:2px;background:linear-gradient(#6a9955 55%,transparent 55%)"></div><div style="position:absolute;left:8px;top:64px;width:5px;height:2px;background:linear-gradient(#569cd6 55%,transparent 55%)"></div><div style="position:absolute;left:14px;top:64px;width:6px;height:2px;background:linear-gradient(#4fc1ff 55%,transparent 55%)"></div><div style="position:absolute;left:21px;top:64px;width:1px;height:2px;background:linear-gradient(#cccccc 55%,transparent 55%)"></div><div style="position:absolute;left:23px;top:64px;width:8px;height:2px;background:linear-gradient(#9cdcfe 55%,transparent 55%)"></div><div style="position:absolute;left:31px;top:64px;width:1px;height:2px;background:linear-gradient(#cccccc 55%,transparent 55%)"></div><div style="position:absolute;left:32px;top:64px;width:9px;height:2px;background:linear-gradient(#dcdcaa 55%,transparent 55%)"></div><div style="position:absolute;left:41px;top:64px;width:2px;height:2px;background:linear-gradient(#ffd700 55%,transparent 55%)"></div><div style="position:absolute;left:8px;top:66px;width:2px;height:2px;background:linear-gradient(#6a9955 55%,transparent 55%)"></div><div style="position:absolute;left:11px;top:66px;width:5px;height:2px;background:linear-gradient(#6a9955 55%,transparent 55%)"></div><div style="position:absolute;left:17px;top:66px;width:4px;height:2px;background:linear-gradient(#6a9955 55%,transparent 55%)"></div><div style="position:absolute;left:22px;top:66px;width:6px;height:2px;background:linear-gradient(#6a9955 55%,transparent 55%)"></div><div style="position:absolute;left:29px;top:66px;width:1px;height:2px;background:linear-gradient(#6a9955 55%,transparent 55%)"></div><div style="position:absolute;left:8px;top:68px;width:3px;height:2px;background:linear-gradient(#569cd6 55%,transparent 55%)"></div><div style="position:absolute;left:12px;top:68px;width:8px;height:2px;background:linear-gradient(#4fc1ff 55%,transparent 55%)"></div><div style="position:absolute;left:21px;top:68px;width:1px;height:2px;background:linear-gradient(#cccccc 55%,transparent 55%)"></div><div style="position:absolute;left:23px;top:68px;width:3px;height:2px;background:linear-gradient(#569cd6 55%,transparent 55%)"></div><div style="position:absolute;left:27px;top:68px;width:6px;height:2px;background:linear-gradient(#9cdcfe 55%,transparent 55%)"></div><div style="position:absolute;left:33px;top:68px;width:1px;height:2px;background:linear-gradient(#cccccc 55%,transparent 55%)"></div><div style="position:absolute;left:34px;top:68px;width:8px;height:2px;background:linear-gradient(#4ec9b0 55%,transparent 55%)"></div><div style="position:absolute;left:42px;top:68px;width:1px;height:2px;background:linear-gradient(#179fff 55%,transparent 55%)"></div><div style="position:absolute;left:12px;top:70px;width:2px;height:2px;background:linear-gradient(#6a9955 55%,transparent 55%)"></div><div style="position:absolute;left:15px;top:70px;width:4px;height:2px;background:linear-gradient(#6a9955 55%,transparent 55%)"></div><div style="position:absolute;left:20px;top:70px;width:4px;height:2px;background:linear-gradient(#6a9955 55%,transparent 55%)"></div><div style="position:absolute;left:25px;top:70px;width:3px;height:2px;background:linear-gradient(#6a9955 55%,transparent 55%)"></div><div style="position:absolute;left:29px;top:70px;width:7px;height:2px;background:linear-gradient(#6a9955 55%,transparent 55%)"></div><div style="position:absolute;left:37px;top:70px;width:3px;height:2px;background:linear-gradient(#6a9955 55%,transparent 55%)"></div><div style="position:absolute;left:41px;top:70px;width:3px;height:2px;background:linear-gradient(#6a9955 55%,transparent 55%)"></div><div style="position:absolute;left:45px;top:70px;width:2px;height:2px;background:linear-gradient(#6a9955 55%,transparent 55%)"></div><div style="position:absolute;left:12px;top:72px;width:3px;height:2px;background:linear-gradient(#ce9178 55%,transparent 55%)"></div><div style="position:absolute;left:16px;top:72px;width:3px;height:2px;background:linear-gradient(#ce9178 55%,transparent 55%)"></div><div style="position:absolute;left:20px;top:72px;width:9px;height:2px;background:linear-gradient(#ce9178 55%,transparent 55%)"></div><div style="position:absolute;left:30px;top:72px;width:7px;height:2px;background:linear-gradient(#ce9178 55%,transparent 55%)"></div><div style="position:absolute;left:38px;top:72px;width:3px;height:2px;background:linear-gradient(#ce9178 55%,transparent 55%)"></div><div style="position:absolute;left:42px;top:72px;width:5px;height:2px;background:linear-gradient(#ce9178 55%,transparent 55%)"></div><div style="position:absolute;left:48px;top:72px;width:6px;height:2px;background:linear-gradient(#ce9178 55%,transparent 55%)"></div><div style="position:absolute;left:54px;top:72px;width:1px;height:2px;background:linear-gradient(#cccccc 55%,transparent 55%)"></div><div style="position:absolute;left:12px;top:74px;width:11px;height:2px;background:linear-gradient(#9cdcfe 55%,transparent 55%)"></div><div style="position:absolute;left:23px;top:74px;width:1px;height:2px;background:linear-gradient(#cccccc 55%,transparent 55%)"></div><div style="position:absolute;left:24px;top:74px;width:3px;height:2px;background:linear-gradient(#9cdcfe 55%,transparent 55%)"></div><div style="position:absolute;left:27px;top:74px;width:1px;height:2px;background:linear-gradient(#cccccc 55%,transparent 55%)"></div><div style="position:absolute;left:12px;top:76px;width:6px;height:2px;background:linear-gradient(#9cdcfe 55%,transparent 55%)"></div><div style="position:absolute;left:8px;top:78px;width:1px;height:2px;background:linear-gradient(#179fff 55%,transparent 55%)"></div><div style="position:absolute;left:9px;top:78px;width:1px;height:2px;background:linear-gradient(#cccccc 55%,transparent 55%)"></div><div style="position:absolute;left:8px;top:82px;width:6px;height:2px;background:linear-gradient(#c586c0 55%,transparent 55%)"></div><div style="position:absolute;left:15px;top:82px;width:8px;height:2px;background:linear-gradient(#9cdcfe 55%,transparent 55%)"></div><div style="position:absolute;left:23px;top:82px;width:1px;height:2px;background:linear-gradient(#cccccc 55%,transparent 55%)"></div><div style="position:absolute;left:4px;top:84px;width:1px;height:2px;background:linear-gradient(#da70d6 55%,transparent 55%)"></div><div style="position:absolute;left:4px;top:88px;width:2px;height:2px;background:linear-gradient(#6a9955 55%,transparent 55%)"></div><div style="position:absolute;left:7px;top:88px;width:5px;height:2px;background:linear-gradient(#6a9955 55%,transparent 55%)"></div><div style="position:absolute;left:13px;top:88px;width:3px;height:2px;background:linear-gradient(#6a9955 55%,transparent 55%)"></div><div style="position:absolute;left:17px;top:88px;width:9px;height:2px;background:linear-gradient(#6a9955 55%,transparent 55%)"></div><div style="position:absolute;left:27px;top:88px;width:1px;height:2px;background:linear-gradient(#6a9955 55%,transparent 55%)"></div><div style="position:absolute;left:29px;top:88px;width:8px;height:2px;background:linear-gradient(#6a9955 55%,transparent 55%)"></div><div style="position:absolute;left:38px;top:88px;width:1px;height:2px;background:linear-gradient(#6a9955 55%,transparent 55%)"></div><div style="position:absolute;left:40px;top:88px;width:2px;height:2px;background:linear-gradient(#6a9955 55%,transparent 55%)"></div><div style="position:absolute;left:43px;top:88px;width:4px;height:2px;background:linear-gradient(#6a9955 55%,transparent 55%)"></div><div style="position:absolute;left:48px;top:88px;width:4px;height:2px;background:linear-gradient(#6a9955 55%,transparent 55%)"></div><div style="position:absolute;left:4px;top:90px;width:5px;height:2px;background:linear-gradient(#569cd6 55%,transparent 55%)"></div><div style="position:absolute;left:10px;top:90px;width:18px;height:2px;background:linear-gradient(#dcdcaa 55%,transparent 55%)"></div><div style="position:absolute;left:29px;top:90px;width:1px;height:2px;background:linear-gradient(#cccccc 55%,transparent 55%)"></div><div style="position:absolute;left:31px;top:90px;width:5px;height:2px;background:linear-gradient(#569cd6 55%,transparent 55%)"></div><div style="position:absolute;left:37px;top:90px;width:2px;height:2px;background:linear-gradient(#da70d6 55%,transparent 55%)"></div><div style="position:absolute;left:40px;top:90px;width:2px;height:2px;background:linear-gradient(#569cd6 55%,transparent 55%)"></div><div style="position:absolute;left:43px;top:90px;width:1px;height:2px;background:linear-gradient(#da70d6 55%,transparent 55%)"></div><div style="position:absolute;left:8px;top:92px;width:2px;height:2px;background:linear-gradient(#6a9955 55%,transparent 55%)"></div><div style="position:absolute;left:11px;top:92px;width:5px;height:2px;background:linear-gradient(#6a9955 55%,transparent 55%)"></div><div style="position:absolute;left:17px;top:92px;width:4px;height:2px;background:linear-gradient(#6a9955 55%,transparent 55%)"></div><div style="position:absolute;left:22px;top:92px;width:4px;height:2px;background:linear-gradient(#6a9955 55%,transparent 55%)"></div><div style="position:absolute;left:8px;top:94px;width:5px;height:2px;background:linear-gradient(#569cd6 55%,transparent 55%)"></div><div style="position:absolute;left:14px;top:94px;width:8px;height:2px;background:linear-gradient(#4fc1ff 55%,transparent 55%)"></div><div style="position:absolute;left:23px;top:94px;width:1px;height:2px;background:linear-gradient(#cccccc 55%,transparent 55%)"></div><div style="position:absolute;left:25px;top:94px;width:5px;height:2px;background:linear-gradient(#c586c0 55%,transparent 55%)"></div><div style="position:absolute;left:31px;top:94px;width:11px;height:2px;background:linear-gradient(#dcdcaa 55%,transparent 55%)"></div><div style="position:absolute;left:42px;top:94px;width:2px;height:2px;background:linear-gradient(#ffd700 55%,transparent 55%)"></div><div style="position:absolute;left:44px;top:94px;width:1px;height:2px;background:linear-gradient(#cccccc 55%,transparent 55%)"></div><div style="position:absolute;left:8px;top:98px;width:2px;height:2px;background:linear-gradient(#6a9955 55%,transparent 55%)"></div><div style="position:absolute;left:11px;top:98px;width:2px;height:2px;background:linear-gradient(#6a9955 55%,transparent 55%)"></div><div style="position:absolute;left:14px;top:98px;width:4px;height:2px;background:linear-gradient(#6a9955 55%,transparent 55%)"></div><div style="position:absolute;left:19px;top:98px;width:4px;height:2px;background:linear-gradient(#6a9955 55%,transparent 55%)"></div><div style="position:absolute;left:24px;top:98px;width:3px;height:2px;background:linear-gradient(#6a9955 55%,transparent 55%)"></div><div style="position:absolute;left:28px;top:98px;width:7px;height:2px;background:linear-gradient(#6a9955 55%,transparent 55%)"></div><div style="position:absolute;left:36px;top:98px;width:6px;height:2px;background:linear-gradient(#6a9955 55%,transparent 55%)"></div><div style="position:absolute;left:43px;top:98px;width:3px;height:2px;background:linear-gradient(#6a9955 55%,transparent 55%)"></div><div style="position:absolute;left:47px;top:98px;width:8px;height:2px;background:linear-gradient(#6a9955 55%,transparent 55%)"></div><div style="position:absolute;left:56px;top:98px;width:2px;height:2px;background:linear-gradient(#6a9955 55%,transparent 55%)"></div><div style="position:absolute;left:59px;top:98px;width:4px;height:2px;background:linear-gradient(#6a9955 55%,transparent 55%)"></div><div style="position:absolute;left:8px;top:100px;width:5px;height:2px;background:linear-gradient(#569cd6 55%,transparent 55%)"></div><div style="position:absolute;left:14px;top:100px;width:6px;height:2px;background:linear-gradient(#4fc1ff 55%,transparent 55%)"></div><div style="position:absolute;left:21px;top:100px;width:1px;height:2px;background:linear-gradient(#cccccc 55%,transparent 55%)"></div><div style="position:absolute;left:23px;top:100px;width:5px;height:2px;background:linear-gradient(#c586c0 55%,transparent 55%)"></div><div style="position:absolute;left:29px;top:100px;width:8px;height:2px;background:linear-gradient(#9cdcfe 55%,transparent 55%)"></div><div style="position:absolute;left:37px;top:100px;width:1px;height:2px;background:linear-gradient(#cccccc 55%,transparent 55%)"></div><div style="position:absolute;left:38px;top:100px;width:10px;height:2px;background:linear-gradient(#dcdcaa 55%,transparent 55%)"></div><div style="position:absolute;left:48px;top:100px;width:2px;height:2px;background:linear-gradient(#ffd700 55%,transparent 55%)"></div><div style="position:absolute;left:8px;top:104px;width:2px;height:2px;background:linear-gradient(#6a9955 55%,transparent 55%)"></div><div style="position:absolute;left:11px;top:104px;width:5px;height:2px;background:linear-gradient(#6a9955 55%,transparent 55%)"></div><div style="position:absolute;left:17px;top:104px;width:8px;height:2px;background:linear-gradient(#6a9955 55%,transparent 55%)"></div><div style="position:absolute;left:26px;top:104px;width:2px;height:2px;background:linear-gradient(#6a9955 55%,transparent 55%)"></div><div style="position:absolute;left:29px;top:104px;width:8px;height:2px;background:linear-gradient(#6a9955 55%,transparent 55%)"></div><div style="position:absolute;left:8px;top:106px;width:5px;height:2px;background:linear-gradient(#569cd6 55%,transparent 55%)"></div><div style="position:absolute;left:14px;top:106px;width:4px;height:2px;background:linear-gradient(#4fc1ff 55%,transparent 55%)"></div><div style="position:absolute;left:19px;top:106px;width:1px;height:2px;background:linear-gradient(#cccccc 55%,transparent 55%)"></div><div style="position:absolute;left:21px;top:106px;width:2px;height:2px;background:linear-gradient(#da70d6 55%,transparent 55%)"></div><div style="position:absolute;left:8px;top:108px;width:2px;height:2px;background:linear-gradient(#6a9955 55%,transparent 55%)"></div><div style="position:absolute;left:11px;top:108px;width:5px;height:2px;background:linear-gradient(#6a9955 55%,transparent 55%)"></div><div style="position:absolute;left:17px;top:108px;width:4px;height:2px;background:linear-gradient(#6a9955 55%,transparent 55%)"></div><div style="position:absolute;left:22px;top:108px;width:5px;height:2px;background:linear-gradient(#6a9955 55%,transparent 55%)"></div><div style="position:absolute;left:28px;top:108px;width:8px;height:2px;background:linear-gradient(#6a9955 55%,transparent 55%)"></div><div style="position:absolute;left:37px;top:108px;width:2px;height:2px;background:linear-gradient(#6a9955 55%,transparent 55%)"></div><div style="position:absolute;left:40px;top:108px;width:3px;height:2px;background:linear-gradient(#6a9955 55%,transparent 55%)"></div><div style="position:absolute;left:44px;top:108px;width:2px;height:2px;background:linear-gradient(#6a9955 55%,transparent 55%)"></div><div style="position:absolute;left:47px;top:108px;width:6px;height:2px;background:linear-gradient(#6a9955 55%,transparent 55%)"></div><div style="position:absolute;left:54px;top:108px;width:3px;height:2px;background:linear-gradient(#6a9955 55%,transparent 55%)"></div><div style="position:absolute;left:58px;top:108px;width:6px;height:2px;background:linear-gradient(#6a9955 55%,transparent 55%)"></div><div style="position:absolute;left:65px;top:108px;width:2px;height:2px;background:linear-gradient(#6a9955 55%,transparent 55%)"></div><div style="position:absolute;left:68px;top:108px;width:4px;height:2px;background:linear-gradient(#6a9955 55%,transparent 55%)"></div><div style="position:absolute;left:73px;top:108px;width:4px;height:2px;background:linear-gradient(#6a9955 55%,transparent 55%)"></div><div style="position:absolute;left:8px;top:110px;width:3px;height:2px;background:linear-gradient(#c586c0 55%,transparent 55%)"></div><div style="position:absolute;left:12px;top:110px;width:1px;height:2px;background:linear-gradient(#ffd700 55%,transparent 55%)"></div><div style="position:absolute;left:13px;top:110px;width:3px;height:2px;background:linear-gradient(#569cd6 55%,transparent 55%)"></div><div style="position:absolute;left:17px;top:110px;width:1px;height:2px;background:linear-gradient(#9cdcfe 55%,transparent 55%)"></div><div style="position:absolute;left:19px;top:110px;width:1px;height:2px;background:linear-gradient(#cccccc 55%,transparent 55%)"></div><div style="position:absolute;left:21px;top:110px;width:1px;height:2px;background:linear-gradient(#9cdcfe 55%,transparent 55%)"></div><div style="position:absolute;left:22px;top:110px;width:1px;height:2px;background:linear-gradient(#cccccc 55%,transparent 55%)"></div><div style="position:absolute;left:24px;top:110px;width:1px;height:2px;background:linear-gradient(#9cdcfe 55%,transparent 55%)"></div><div style="position:absolute;left:26px;top:110px;width:2px;height:2px;background:linear-gradient(#cccccc 55%,transparent 55%)"></div><div style="position:absolute;left:29px;top:110px;width:9px;height:2px;background:linear-gradient(#dcdcaa 55%,transparent 55%)"></div><div style="position:absolute;left:38px;top:110px;width:3px;height:2px;background:linear-gradient(#cccccc 55%,transparent 55%)"></div><div style="position:absolute;left:42px;top:110px;width:3px;height:2px;background:linear-gradient(#9cdcfe 55%,transparent 55%)"></div><div style="position:absolute;left:45px;top:110px;width:1px;height:2px;background:linear-gradient(#cccccc 55%,transparent 55%)"></div><div style="position:absolute;left:46px;top:110px;width:1px;height:2px;background:linear-gradient(#ffd700 55%,transparent 55%)"></div><div style="position:absolute;left:48px;top:110px;width:1px;height:2px;background:linear-gradient(#ffd700 55%,transparent 55%)"></div><div style="position:absolute;left:12px;top:112px;width:4px;height:2px;background:linear-gradient(#9cdcfe 55%,transparent 55%)"></div><div style="position:absolute;left:16px;top:112px;width:1px;height:2px;background:linear-gradient(#cccccc 55%,transparent 55%)"></div><div style="position:absolute;left:17px;top:112px;width:4px;height:2px;background:linear-gradient(#dcdcaa 55%,transparent 55%)"></div><div style="position:absolute;left:21px;top:112px;width:1px;height:2px;background:linear-gradient(#da70d6 55%,transparent 55%)"></div><div style="position:absolute;left:22px;top:112px;width:5px;height:2px;background:linear-gradient(#c586c0 55%,transparent 55%)"></div><div style="position:absolute;left:28px;top:112px;width:8px;height:2px;background:linear-gradient(#9cdcfe 55%,transparent 55%)"></div><div style="position:absolute;left:36px;top:112px;width:1px;height:2px;background:linear-gradient(#cccccc 55%,transparent 55%)"></div><div style="position:absolute;left:37px;top:112px;width:6px;height:2px;background:linear-gradient(#dcdcaa 55%,transparent 55%)"></div><div style="position:absolute;left:43px;top:112px;width:1px;height:2px;background:linear-gradient(#179fff 55%,transparent 55%)"></div><div style="position:absolute;left:44px;top:112px;width:1px;height:2px;background:linear-gradient(#9cdcfe 55%,transparent 55%)"></div><div style="position:absolute;left:45px;top:112px;width:1px;height:2px;background:linear-gradient(#179fff 55%,transparent 55%)"></div><div style="position:absolute;left:46px;top:112px;width:1px;height:2px;background:linear-gradient(#da70d6 55%,transparent 55%)"></div><div style="position:absolute;left:8px;top:114px;width:1px;height:2px;background:linear-gradient(#ffd700 55%,transparent 55%)"></div><div style="position:absolute;left:8px;top:116px;width:2px;height:2px;background:linear-gradient(#6a9955 55%,transparent 55%)"></div><div style="position:absolute;left:11px;top:116px;width:1px;height:2px;background:linear-gradient(#6a9955 55%,transparent 55%)"></div><div style="position:absolute;left:13px;top:116px;width:4px;height:2px;background:linear-gradient(#6a9955 55%,transparent 55%)"></div><div style="position:absolute;left:18px;top:116px;width:7px;height:2px;background:linear-gradient(#6a9955 55%,transparent 55%)"></div><div style="position:absolute;left:26px;top:116px;width:4px;height:2px;background:linear-gradient(#6a9955 55%,transparent 55%)"></div><div style="position:absolute;left:31px;top:116px;width:4px;height:2px;background:linear-gradient(#6a9955 55%,transparent 55%)"></div><div style="position:absolute;left:36px;top:116px;width:5px;height:2px;background:linear-gradient(#6a9955 55%,transparent 55%)"></div><div style="position:absolute;left:42px;top:116px;width:2px;height:2px;background:linear-gradient(#6a9955 55%,transparent 55%)"></div><div style="position:absolute;left:45px;top:116px;width:2px;height:2px;background:linear-gradient(#6a9955 55%,transparent 55%)"></div><div style="position:absolute;left:48px;top:116px;width:3px;height:2px;background:linear-gradient(#6a9955 55%,transparent 55%)"></div><div style="position:absolute;left:8px;top:118px;width:8px;height:2px;background:linear-gradient(#dcdcaa 55%,transparent 55%)"></div><div style="position:absolute;left:16px;top:118px;width:1px;height:2px;background:linear-gradient(#da70d6 55%,transparent 55%)"></div><div style="position:absolute;left:17px;top:118px;width:5px;height:2px;background:linear-gradient(#9cdcfe 55%,transparent 55%)"></div><div style="position:absolute;left:22px;top:118px;width:1px;height:2px;background:linear-gradient(#cccccc 55%,transparent 55%)"></div><div style="position:absolute;left:23px;top:118px;width:6px;height:2px;background:linear-gradient(#dcdcaa 55%,transparent 55%)"></div><div style="position:absolute;left:29px;top:118px;width:1px;height:2px;background:linear-gradient(#cccccc 55%,transparent 55%)"></div><div style="position:absolute;left:30px;top:118px;width:4px;height:2px;background:linear-gradient(#da70d6 55%,transparent 55%)"></div><div style="position:absolute;left:34px;top:118px;width:1px;height:2px;background:linear-gradient(#179fff 55%,transparent 55%)"></div><div style="position:absolute;left:35px;top:118px;width:1px;height:2px;background:linear-gradient(#9cdcfe 55%,transparent 55%)"></div><div style="position:absolute;left:36px;top:118px;width:1px;height:2px;background:linear-gradient(#cccccc 55%,transparent 55%)"></div><div style="position:absolute;left:37px;top:118px;width:2px;height:2px;background:linear-gradient(#9cdcfe 55%,transparent 55%)"></div><div style="position:absolute;left:8px;top:120px;width:2px;height:2px;background:linear-gradient(#6a9955 55%,transparent 55%)"></div><div style="position:absolute;left:11px;top:120px;width:1px;height:2px;background:linear-gradient(#6a9955 55%,transparent 55%)"></div><div style="position:absolute;left:13px;top:120px;width:4px;height:2px;background:linear-gradient(#6a9955 55%,transparent 55%)"></div><div style="position:absolute;left:18px;top:120px;width:7px;height:2px;background:linear-gradient(#6a9955 55%,transparent 55%)"></div><div style="position:absolute;left:26px;top:120px;width:1px;height:2px;background:linear-gradient(#6a9955 55%,transparent 55%)"></div><div style="position:absolute;left:28px;top:120px;width:6px;height:2px;background:linear-gradient(#6a9955 55%,transparent 55%)"></div><div style="position:absolute;left:35px;top:120px;width:2px;height:2px;background:linear-gradient(#6a9955 55%,transparent 55%)"></div><div style="position:absolute;left:8px;top:122px;width:18px;height:2px;background:linear-gradient(#dcdcaa 55%,transparent 55%)"></div><div style="position:absolute;left:26px;top:122px;width:1px;height:2px;background:linear-gradient(#da70d6 55%,transparent 55%)"></div><div style="position:absolute;left:27px;top:122px;width:7px;height:2px;background:linear-gradient(#9cdcfe 55%,transparent 55%)"></div><div style="position:absolute;left:34px;top:122px;width:1px;height:2px;background:linear-gradient(#cccccc 55%,transparent 55%)"></div><div style="position:absolute;left:35px;top:122px;width:4px;height:2px;background:linear-gradient(#569cd6 55%,transparent 55%)"></div><div style="position:absolute;left:39px;top:122px;width:1px;height:2px;background:linear-gradient(#cccccc 55%,transparent 55%)"></div><div style="position:absolute;left:40px;top:122px;width:7px;height:2px;background:linear-gradient(#dcdcaa 55%,transparent 55%)"></div><div style="position:absolute;left:47px;top:122px;width:3px;height:2px;background:linear-gradient(#179fff 55%,transparent 55%)"></div><div style="position:absolute;left:50px;top:122px;width:1px;height:2px;background:linear-gradient(#da70d6 55%,transparent 55%)"></div><div style="position:absolute;left:4px;top:124px;width:1px;height:2px;background:linear-gradient(#da70d6 55%,transparent 55%)"></div><div style="position:absolute;left:4px;top:128px;width:9px;height:2px;background:linear-gradient(#dcdcaa 55%,transparent 55%)"></div><div style="position:absolute;left:13px;top:128px;width:1px;height:2px;background:linear-gradient(#da70d6 55%,transparent 55%)"></div><div style="position:absolute;left:14px;top:128px;width:2px;height:2px;background:linear-gradient(#ffd700 55%,transparent 55%)"></div><div style="position:absolute;left:17px;top:128px;width:2px;height:2px;background:linear-gradient(#569cd6 55%,transparent 55%)"></div><div style="position:absolute;left:20px;top:128px;width:1px;height:2px;background:linear-gradient(#ffd700 55%,transparent 55%)"></div><div style="position:absolute;left:8px;top:130px;width:18px;height:2px;background:linear-gradient(#dcdcaa 55%,transparent 55%)"></div><div style="position:absolute;left:26px;top:130px;width:2px;height:2px;background:linear-gradient(#ffd700 55%,transparent 55%)"></div><div style="position:absolute;left:4px;top:132px;width:1px;height:2px;background:linear-gradient(#ffd700 55%,transparent 55%)"></div><div style="position:absolute;left:5px;top:132px;width:1px;height:2px;background:linear-gradient(#da70d6 55%,transparent 55%)"></div><div style="position:absolute;left:7px;top:132px;width:2px;height:2px;background:linear-gradient(#da70d6 55%,transparent 55%)"></div><div style="position:absolute;left:4px;top:136px;width:6px;height:2px;background:linear-gradient(#c586c0 55%,transparent 55%)"></div><div style="position:absolute;left:11px;top:136px;width:1px;height:2px;background:linear-gradient(#da70d6 55%,transparent 55%)"></div><div style="position:absolute;left:8px;top:138px;width:1px;height:2px;background:linear-gradient(#cccccc 55%,transparent 55%)"></div><div style="position:absolute;left:9px;top:138px;width:3px;height:2px;background:linear-gradient(#569cd6 55%,transparent 55%)"></div><div style="position:absolute;left:13px;top:138px;width:9px;height:2px;background:linear-gradient(#9cdcfe 55%,transparent 55%)"></div><div style="position:absolute;left:22px;top:138px;width:1px;height:2px;background:linear-gradient(#cccccc 55%,transparent 55%)"></div><div style="position:absolute;left:23px;top:138px;width:1px;height:2px;background:linear-gradient(#ce9178 55%,transparent 55%)"></div><div style="position:absolute;left:12px;top:140px;width:1px;height:2px;background:linear-gradient(#cccccc 55%,transparent 55%)"></div><div style="position:absolute;left:13px;top:140px;width:6px;height:2px;background:linear-gradient(#4ec9b0 55%,transparent 55%)"></div><div style="position:absolute;left:20px;top:140px;width:2px;height:2px;background:linear-gradient(#cccccc 55%,transparent 55%)"></div><div style="position:absolute;left:12px;top:142px;width:1px;height:2px;background:linear-gradient(#cccccc 55%,transparent 55%)"></div><div style="position:absolute;left:13px;top:142px;width:3px;height:2px;background:linear-gradient(#569cd6 55%,transparent 55%)"></div><div style="position:absolute;left:17px;top:142px;width:9px;height:2px;background:linear-gradient(#9cdcfe 55%,transparent 55%)"></div><div style="position:absolute;left:26px;top:142px;width:1px;height:2px;background:linear-gradient(#cccccc 55%,transparent 55%)"></div><div style="position:absolute;left:27px;top:142px;width:4px;height:2px;background:linear-gradient(#ce9178 55%,transparent 55%)"></div><div style="position:absolute;left:32px;top:142px;width:3px;height:2px;background:linear-gradient(#ce9178 55%,transparent 55%)"></div><div style="position:absolute;left:36px;top:142px;width:3px;height:2px;background:linear-gradient(#ce9178 55%,transparent 55%)"></div><div style="position:absolute;left:40px;top:142px;width:6px;height:2px;background:linear-gradient(#ce9178 55%,transparent 55%)"></div><div style="position:absolute;left:47px;top:142px;width:6px;height:2px;background:linear-gradient(#ce9178 55%,transparent 55%)"></div><div style="position:absolute;left:54px;top:142px;width:2px;height:2px;background:linear-gradient(#ce9178 55%,transparent 55%)"></div><div style="position:absolute;left:56px;top:142px;width:1px;height:2px;background:linear-gradient(#cccccc 55%,transparent 55%)"></div><div style="position:absolute;left:16px;top:144px;width:1px;height:2px;background:linear-gradient(#cccccc 55%,transparent 55%)"></div><div style="position:absolute;left:17px;top:144px;width:3px;height:2px;background:linear-gradient(#569cd6 55%,transparent 55%)"></div><div style="position:absolute;left:21px;top:144px;width:9px;height:2px;background:linear-gradient(#9cdcfe 55%,transparent 55%)"></div><div style="position:absolute;left:30px;top:144px;width:1px;height:2px;background:linear-gradient(#cccccc 55%,transparent 55%)"></div><div style="position:absolute;left:31px;top:144px;width:4px;height:2px;background:linear-gradient(#ce9178 55%,transparent 55%)"></div><div style="position:absolute;left:36px;top:144px;width:3px;height:2px;background:linear-gradient(#ce9178 55%,transparent 55%)"></div><div style="position:absolute;left:40px;top:144px;width:7px;height:2px;background:linear-gradient(#ce9178 55%,transparent 55%)"></div><div style="position:absolute;left:48px;top:144px;width:5px;height:2px;background:linear-gradient(#ce9178 55%,transparent 55%)"></div><div style="position:absolute;left:53px;top:144px;width:1px;height:2px;background:linear-gradient(#cccccc 55%,transparent 55%)"></div><div style="position:absolute;left:20px;top:146px;width:1px;height:2px;background:linear-gradient(#179fff 55%,transparent 55%)"></div><div style="position:absolute;left:21px;top:146px;width:5px;height:2px;background:linear-gradient(#9cdcfe 55%,transparent 55%)"></div><div style="position:absolute;left:27px;top:146px;width:2px;height:2px;background:linear-gradient(#cccccc 55%,transparent 55%)"></div><div style="position:absolute;left:30px;top:146px;width:1px;height:2px;background:linear-gradient(#ffd700 55%,transparent 55%)"></div><div style="position:absolute;left:20px;top:148px;width:1px;height:2px;background:linear-gradient(#cccccc 55%,transparent 55%)"></div><div style="position:absolute;left:21px;top:148px;width:3px;height:2px;background:linear-gradient(#569cd6 55%,transparent 55%)"></div><div style="position:absolute;left:25px;top:148px;width:9px;height:2px;background:linear-gradient(#9cdcfe 55%,transparent 55%)"></div><div style="position:absolute;left:34px;top:148px;width:1px;height:2px;background:linear-gradient(#cccccc 55%,transparent 55%)"></div><div style="position:absolute;left:35px;top:148px;width:3px;height:2px;background:linear-gradient(#ce9178 55%,transparent 55%)"></div><div style="position:absolute;left:39px;top:148px;width:9px;height:2px;background:linear-gradient(#ce9178 55%,transparent 55%)"></div><div style="position:absolute;left:49px;top:148px;width:7px;height:2px;background:linear-gradient(#ce9178 55%,transparent 55%)"></div><div style="position:absolute;left:57px;top:148px;width:3px;height:2px;background:linear-gradient(#ce9178 55%,transparent 55%)"></div><div style="position:absolute;left:61px;top:148px;width:4px;height:2px;background:linear-gradient(#ce9178 55%,transparent 55%)"></div><div style="position:absolute;left:66px;top:148px;width:8px;height:2px;background:linear-gradient(#ce9178 55%,transparent 55%)"></div><div style="position:absolute;left:75px;top:148px;width:8px;height:2px;background:linear-gradient(#ce9178 55%,transparent 55%)"></div><div style="position:absolute;left:83px;top:148px;width:1px;height:2px;background:linear-gradient(#cccccc 55%,transparent 55%)"></div><div style="position:absolute;left:24px;top:150px;width:1px;height:2px;background:linear-gradient(#cccccc 55%,transparent 55%)"></div><div style="position:absolute;left:25px;top:150px;width:3px;height:2px;background:linear-gradient(#569cd6 55%,transparent 55%)"></div><div style="position:absolute;left:29px;top:150px;width:9px;height:2px;background:linear-gradient(#9cdcfe 55%,transparent 55%)"></div><div style="position:absolute;left:38px;top:150px;width:1px;height:2px;background:linear-gradient(#cccccc 55%,transparent 55%)"></div><div style="position:absolute;left:39px;top:150px;width:7px;height:2px;background:linear-gradient(#ce9178 55%,transparent 55%)"></div><div style="position:absolute;left:47px;top:150px;width:3px;height:2px;background:linear-gradient(#ce9178 55%,transparent 55%)"></div><div style="position:absolute;left:51px;top:150px;width:4px;height:2px;background:linear-gradient(#ce9178 55%,transparent 55%)"></div><div style="position:absolute;left:55px;top:150px;width:1px;height:2px;background:linear-gradient(#cccccc 55%,transparent 55%)"></div><div style="position:absolute;left:28px;top:152px;width:1px;height:2px;background:linear-gradient(#cccccc 55%,transparent 55%)"></div><div style="position:absolute;left:29px;top:152px;width:6px;height:2px;background:linear-gradient(#4ec9b0 55%,transparent 55%)"></div><div style="position:absolute;left:36px;top:152px;width:3px;height:2px;background:linear-gradient(#9cdcfe 55%,transparent 55%)"></div><div style="position:absolute;left:39px;top:152px;width:1px;height:2px;background:linear-gradient(#cccccc 55%,transparent 55%)"></div><div style="position:absolute;left:40px;top:152px;width:1px;height:2px;background:linear-gradient(#ffd700 55%,transparent 55%)"></div><div style="position:absolute;left:41px;top:152px;width:7px;height:2px;background:linear-gradient(#9cdcfe 55%,transparent 55%)"></div><div style="position:absolute;left:48px;top:152px;width:1px;height:2px;background:linear-gradient(#ffd700 55%,transparent 55%)"></div><div style="position:absolute;left:50px;top:152px;width:2px;height:2px;background:linear-gradient(#cccccc 55%,transparent 55%)"></div><div style="position:absolute;left:24px;top:154px;width:2px;height:2px;background:linear-gradient(#cccccc 55%,transparent 55%)"></div><div style="position:absolute;left:26px;top:154px;width:3px;height:2px;background:linear-gradient(#569cd6 55%,transparent 55%)"></div><div style="position:absolute;left:29px;top:154px;width:1px;height:2px;background:linear-gradient(#cccccc 55%,transparent 55%)"></div><div style="position:absolute;left:24px;top:156px;width:1px;height:2px;background:linear-gradient(#cccccc 55%,transparent 55%)"></div><div style="position:absolute;left:25px;top:156px;width:3px;height:2px;background:linear-gradient(#569cd6 55%,transparent 55%)"></div><div style="position:absolute;left:29px;top:156px;width:9px;height:2px;background:linear-gradient(#9cdcfe 55%,transparent 55%)"></div><div style="position:absolute;left:38px;top:156px;width:1px;height:2px;background:linear-gradient(#cccccc 55%,transparent 55%)"></div><div style="position:absolute;left:39px;top:156px;width:7px;height:2px;background:linear-gradient(#ce9178 55%,transparent 55%)"></div><div style="position:absolute;left:46px;top:156px;width:1px;height:2px;background:linear-gradient(#cccccc 55%,transparent 55%)"></div><div style="position:absolute;left:28px;top:158px;width:1px;height:2px;background:linear-gradient(#cccccc 55%,transparent 55%)"></div><div style="position:absolute;left:29px;top:158px;width:2px;height:2px;background:linear-gradient(#569cd6 55%,transparent 55%)"></div><div style="position:absolute;left:32px;top:158px;width:9px;height:2px;background:linear-gradient(#9cdcfe 55%,transparent 55%)"></div><div style="position:absolute;left:41px;top:158px;width:1px;height:2px;background:linear-gradient(#cccccc 55%,transparent 55%)"></div><div style="position:absolute;left:42px;top:158px;width:7px;height:2px;background:linear-gradient(#ce9178 55%,transparent 55%)"></div><div style="position:absolute;left:50px;top:158px;width:6px;height:2px;background:linear-gradient(#ce9178 55%,transparent 55%)"></div><div style="position:absolute;left:57px;top:158px;width:3px;height:2px;background:linear-gradient(#ce9178 55%,transparent 55%)"></div><div style="position:absolute;left:61px;top:158px;width:4px;height:2px;background:linear-gradient(#ce9178 55%,transparent 55%)"></div><div style="position:absolute;left:66px;top:158px;width:3px;height:2px;background:linear-gradient(#ce9178 55%,transparent 55%)"></div><div style="position:absolute;left:70px;top:158px;width:7px;height:2px;background:linear-gradient(#ce9178 55%,transparent 55%)"></div><div style="position:absolute;left:77px;top:158px;width:1px;height:2px;background:linear-gradient(#cccccc 55%,transparent 55%)"></div><div style="position:absolute;left:32px;top:160px;width:1px;height:2px;background:linear-gradient(#179fff 55%,transparent 55%)"></div><div style="position:absolute;left:33px;top:160px;width:5px;height:2px;background:linear-gradient(#9cdcfe 55%,transparent 55%)"></div><div style="position:absolute;left:38px;top:160px;width:1px;height:2px;background:linear-gradient(#cccccc 55%,transparent 55%)"></div><div style="position:absolute;left:39px;top:160px;width:5px;height:2px;background:linear-gradient(#9cdcfe 55%,transparent 55%)"></div><div style="position:absolute;left:44px;top:160px;width:1px;height:2px;background:linear-gradient(#179fff 55%,transparent 55%)"></div><div style="position:absolute;left:28px;top:162px;width:2px;height:2px;background:linear-gradient(#cccccc 55%,transparent 55%)"></div><div style="position:absolute;left:30px;top:162px;width:2px;height:2px;background:linear-gradient(#569cd6 55%,transparent 55%)"></div><div style="position:absolute;left:32px;top:162px;width:1px;height:2px;background:linear-gradient(#cccccc 55%,transparent 55%)"></div><div style="position:absolute;left:28px;top:164px;width:1px;height:2px;background:linear-gradient(#cccccc 55%,transparent 55%)"></div><div style="position:absolute;left:29px;top:164px;width:1px;height:2px;background:linear-gradient(#569cd6 55%,transparent 55%)"></div><div style="position:absolute;left:31px;top:164px;width:9px;height:2px;background:linear-gradient(#9cdcfe 55%,transparent 55%)"></div><div style="position:absolute;left:40px;top:164px;width:1px;height:2px;background:linear-gradient(#cccccc 55%,transparent 55%)"></div><div style="position:absolute;left:41px;top:164px;width:9px;height:2px;background:linear-gradient(#ce9178 55%,transparent 55%)"></div><div style="position:absolute;left:51px;top:164px;width:4px;height:2px;background:linear-gradient(#ce9178 55%,transparent 55%)"></div><div style="position:absolute;left:56px;top:164px;width:6px;height:2px;background:linear-gradient(#dcdcaa 55%,transparent 55%)"></div><div style="position:absolute;left:62px;top:164px;width:1px;height:2px;background:linear-gradient(#cccccc 55%,transparent 55%)"></div><div style="position:absolute;left:32px;top:166px;width:1px;height:2px;background:linear-gradient(#cccccc 55%,transparent 55%)"></div><div style="position:absolute;left:33px;top:166px;width:4px;height:2px;background:linear-gradient(#569cd6 55%,transparent 55%)"></div><div style="position:absolute;left:37px;top:166px;width:1px;height:2px;background:linear-gradient(#cccccc 55%,transparent 55%)"></div><div style="position:absolute;left:36px;top:168px;width:1px;height:2px;background:linear-gradient(#179fff 55%,transparent 55%)"></div><div style="position:absolute;left:37px;top:168px;width:5px;height:2px;background:linear-gradient(#9cdcfe 55%,transparent 55%)"></div><div style="position:absolute;left:42px;top:168px;width:1px;height:2px;background:linear-gradient(#cccccc 55%,transparent 55%)"></div><div style="position:absolute;left:43px;top:168px;width:5px;height:2px;background:linear-gradient(#9cdcfe 55%,transparent 55%)"></div><div style="position:absolute;left:48px;top:168px;width:1px;height:2px;background:linear-gradient(#179fff 55%,transparent 55%)"></div><div style="position:absolute;left:50px;top:168px;width:4px;height:2px;background:linear-gradient(#ce9178 55%,transparent 55%)"></div><div style="position:absolute;left:55px;top:168px;width:1px;height:2px;background:linear-gradient(#179fff 55%,transparent 55%)"></div><div style="position:absolute;left:56px;top:168px;width:6px;height:2px;background:linear-gradient(#dcdcaa 55%,transparent 55%)"></div><div style="position:absolute;left:62px;top:168px;width:1px;height:2px;background:linear-gradient(#179fff 55%,transparent 55%)"></div><div style="position:absolute;left:63px;top:168px;width:5px;height:2px;background:linear-gradient(#9cdcfe 55%,transparent 55%)"></div><div style="position:absolute;left:68px;top:168px;width:1px;height:2px;background:linear-gradient(#cccccc 55%,transparent 55%)"></div><div style="position:absolute;left:69px;top:168px;width:9px;height:2px;background:linear-gradient(#dcdcaa 55%,transparent 55%)"></div><div style="position:absolute;left:78px;top:168px;width:1px;height:2px;background:linear-gradient(#179fff 55%,transparent 55%)"></div><div style="position:absolute;left:79px;top:168px;width:1px;height:2px;background:linear-gradient(#cccccc 55%,transparent 55%)"></div><div style="position:absolute;left:40px;top:170px;width:1px;height:2px;background:linear-gradient(#179fff 55%,transparent 55%)"></div><div style="position:absolute;left:41px;top:170px;width:5px;height:2px;background:linear-gradient(#9cdcfe 55%,transparent 55%)"></div><div style="position:absolute;left:46px;top:170px;width:1px;height:2px;background:linear-gradient(#cccccc 55%,transparent 55%)"></div><div style="position:absolute;left:47px;top:170px;width:4px;height:2px;background:linear-gradient(#9cdcfe 55%,transparent 55%)"></div><div style="position:absolute;left:51px;top:170px;width:1px;height:2px;background:linear-gradient(#179fff 55%,transparent 55%)"></div><div style="position:absolute;left:53px;top:170px;width:10px;height:2px;background:linear-gradient(#dcdcaa 55%,transparent 55%)"></div><div style="position:absolute;left:63px;top:170px;width:1px;height:2px;background:linear-gradient(#179fff 55%,transparent 55%)"></div><div style="position:absolute;left:64px;top:170px;width:15px;height:2px;background:linear-gradient(#9cdcfe 55%,transparent 55%)"></div><div style="position:absolute;left:79px;top:170px;width:1px;height:2px;background:linear-gradient(#cccccc 55%,transparent 55%)"></div><div style="position:absolute;left:80px;top:170px;width:3px;height:2px;background:linear-gradient(#179fff 55%,transparent 55%)"></div><div style="position:absolute;left:36px;top:172px;width:1px;height:2px;background:linear-gradient(#179fff 55%,transparent 55%)"></div><div style="position:absolute;left:36px;top:174px;width:2px;height:2px;background:linear-gradient(#cccccc 55%,transparent 55%)"></div><div style="position:absolute;left:38px;top:174px;width:4px;height:2px;background:linear-gradient(#569cd6 55%,transparent 55%)"></div><div style="position:absolute;left:42px;top:174px;width:1px;height:2px;background:linear-gradient(#cccccc 55%,transparent 55%)"></div><div style="position:absolute;left:44px;top:174px;width:4px;height:2px;background:linear-gradient(#9cdcfe 55%,transparent 55%)"></div><div style="position:absolute;left:36px;top:176px;width:1px;height:2px;background:linear-gradient(#cccccc 55%,transparent 55%)"></div><div style="position:absolute;left:37px;top:176px;width:3px;height:2px;background:linear-gradient(#569cd6 55%,transparent 55%)"></div><div style="position:absolute;left:41px;top:176px;width:9px;height:2px;background:linear-gradient(#9cdcfe 55%,transparent 55%)"></div><div style="position:absolute;left:50px;top:176px;width:1px;height:2px;background:linear-gradient(#cccccc 55%,transparent 55%)"></div><div style="position:absolute;left:51px;top:176px;width:5px;height:2px;background:linear-gradient(#ce9178 55%,transparent 55%)"></div><div style="position:absolute;left:57px;top:176px;width:6px;height:2px;background:linear-gradient(#ce9178 55%,transparent 55%)"></div><div style="position:absolute;left:64px;top:176px;width:4px;height:2px;background:linear-gradient(#ce9178 55%,transparent 55%)"></div><div style="position:absolute;left:69px;top:176px;width:7px;height:2px;background:linear-gradient(#ce9178 55%,transparent 55%)"></div><div style="position:absolute;left:77px;top:176px;width:3px;height:2px;background:linear-gradient(#ce9178 55%,transparent 55%)"></div><div style="position:absolute;left:81px;top:176px;width:7px;height:2px;background:linear-gradient(#ce9178 55%,transparent 55%)"></div><div style="position:absolute;left:89px;top:176px;width:5px;height:2px;background:linear-gradient(#ce9178 55%,transparent 55%)"></div><div style="position:absolute;left:95px;top:176px;width:2px;height:2px;background:linear-gradient(#ce9178 55%,transparent 55%)"></div><div style="position:absolute;left:32px;top:178px;width:1px;height:2px;background:linear-gradient(#179fff 55%,transparent 55%)"></div><div style="position:absolute;left:36px;top:180px;width:3px;height:2px;background:linear-gradient(#569cd6 55%,transparent 55%)"></div><div style="position:absolute;left:40px;top:180px;width:9px;height:2px;background:linear-gradient(#9cdcfe 55%,transparent 55%)"></div><div style="position:absolute;left:49px;top:180px;width:1px;height:2px;background:linear-gradient(#cccccc 55%,transparent 55%)"></div><div style="position:absolute;left:50px;top:180px;width:9px;height:2px;background:linear-gradient(#ce9178 55%,transparent 55%)"></div><div style="position:absolute;left:60px;top:180px;width:8px;height:2px;background:linear-gradient(#ce9178 55%,transparent 55%)"></div><div style="position:absolute;left:69px;top:180px;width:4px;height:2px;background:linear-gradient(#ce9178 55%,transparent 55%)"></div><div style="position:absolute;left:74px;top:180px;width:3px;height:2px;background:linear-gradient(#ce9178 55%,transparent 55%)"></div><div style="position:absolute;left:78px;top:180px;width:7px;height:2px;background:linear-gradient(#ce9178 55%,transparent 55%)"></div><div style="position:absolute;left:86px;top:180px;width:7px;height:2px;background:linear-gradient(#ce9178 55%,transparent 55%)"></div><div style="position:absolute;left:94px;top:180px;width:8px;height:2px;background:linear-gradient(#ce9178 55%,transparent 55%)"></div><div style="position:absolute;left:103px;top:180px;width:4px;height:2px;background:linear-gradient(#ce9178 55%,transparent 55%)"></div><div style="position:absolute;left:108px;top:180px;width:4px;height:2px;background:linear-gradient(#ce9178 55%,transparent 55%)"></div><div style="position:absolute;left:40px;top:182px;width:2px;height:2px;background:linear-gradient(#569cd6 55%,transparent 55%)"></div><div style="position:absolute;left:43px;top:182px;width:9px;height:2px;background:linear-gradient(#9cdcfe 55%,transparent 55%)"></div><div style="position:absolute;left:52px;top:182px;width:1px;height:2px;background:linear-gradient(#cccccc 55%,transparent 55%)"></div><div style="position:absolute;left:53px;top:182px;width:3px;height:2px;background:linear-gradient(#ce9178 55%,transparent 55%)"></div><div style="position:absolute;left:57px;top:182px;width:7px;height:2px;background:linear-gradient(#ce9178 55%,transparent 55%)"></div><div style="position:absolute;left:65px;top:182px;width:8px;height:2px;background:linear-gradient(#ce9178 55%,transparent 55%)"></div><div style="position:absolute;left:74px;top:182px;width:1px;height:2px;background:linear-gradient(#ce9178 55%,transparent 55%)"></div><div style="position:absolute;left:76px;top:182px;width:4px;height:2px;background:linear-gradient(#9cdcfe 55%,transparent 55%)"></div><div style="position:absolute;left:80px;top:182px;width:1px;height:2px;background:linear-gradient(#cccccc 55%,transparent 55%)"></div><div style="position:absolute;left:81px;top:182px;width:3px;height:2px;background:linear-gradient(#dcdcaa 55%,transparent 55%)"></div><div style="position:absolute;left:85px;top:182px;width:6px;height:2px;background:linear-gradient(#9cdcfe 55%,transparent 55%)"></div><div style="position:absolute;left:91px;top:182px;width:1px;height:2px;background:linear-gradient(#cccccc 55%,transparent 55%)"></div><div style="position:absolute;left:92px;top:182px;width:12px;height:2px;background:linear-gradient(#9cdcfe 55%,transparent 55%)"></div><div style="position:absolute;left:105px;top:182px;width:7px;height:2px;background:linear-gradient(#9cdcfe 55%,transparent 55%)"></div><div style="position:absolute;left:40px;top:184px;width:2px;height:2px;background:linear-gradient(#569cd6 55%,transparent 55%)"></div><div style="position:absolute;left:43px;top:184px;width:9px;height:2px;background:linear-gradient(#9cdcfe 55%,transparent 55%)"></div><div style="position:absolute;left:52px;top:184px;width:1px;height:2px;background:linear-gradient(#cccccc 55%,transparent 55%)"></div><div style="position:absolute;left:53px;top:184px;width:7px;height:2px;background:linear-gradient(#ce9178 55%,transparent 55%)"></div><div style="position:absolute;left:61px;top:184px;width:2px;height:2px;background:linear-gradient(#ce9178 55%,transparent 55%)"></div><div style="position:absolute;left:44px;top:186px;width:2px;height:2px;background:linear-gradient(#569cd6 55%,transparent 55%)"></div><div style="position:absolute;left:47px;top:186px;width:9px;height:2px;background:linear-gradient(#9cdcfe 55%,transparent 55%)"></div><div style="position:absolute;left:56px;top:186px;width:1px;height:2px;background:linear-gradient(#cccccc 55%,transparent 55%)"></div><div style="position:absolute;left:57px;top:186px;width:7px;height:2px;background:linear-gradient(#ce9178 55%,transparent 55%)"></div><div style="position:absolute;left:65px;top:186px;width:4px;height:2px;background:linear-gradient(#ce9178 55%,transparent 55%)"></div><div style="position:absolute;left:70px;top:186px;width:6px;height:2px;background:linear-gradient(#ce9178 55%,transparent 55%)"></div><div style="position:absolute;left:77px;top:186px;width:4px;height:2px;background:linear-gradient(#ce9178 55%,transparent 55%)"></div><div style="position:absolute;left:48px;top:188px;width:1px;height:2px;background:linear-gradient(#179fff 55%,transparent 55%)"></div><div style="position:absolute;left:49px;top:188px;width:14px;height:2px;background:linear-gradient(#9cdcfe 55%,transparent 55%)"></div><div style="position:absolute;left:44px;top:190px;width:2px;height:2px;background:linear-gradient(#cccccc 55%,transparent 55%)"></div><div style="position:absolute;left:46px;top:190px;width:2px;height:2px;background:linear-gradient(#569cd6 55%,transparent 55%)"></div><div style="position:absolute;left:44px;top:192px;width:1px;height:2px;background:linear-gradient(#cccccc 55%,transparent 55%)"></div><div style="position:absolute;left:45px;top:192px;width:2px;height:2px;background:linear-gradient(#569cd6 55%,transparent 55%)"></div><div style="position:absolute;left:48px;top:192px;width:9px;height:2px;background:linear-gradient(#9cdcfe 55%,transparent 55%)"></div><div style="position:absolute;left:57px;top:192px;width:1px;height:2px;background:linear-gradient(#cccccc 55%,transparent 55%)"></div><div style="position:absolute;left:58px;top:192px;width:7px;height:2px;background:linear-gradient(#ce9178 55%,transparent 55%)"></div><div style="position:absolute;left:66px;top:192px;width:5px;height:2px;background:linear-gradient(#ce9178 55%,transparent 55%)"></div><div style="position:absolute;left:72px;top:192px;width:9px;height:2px;background:linear-gradient(#ce9178 55%,transparent 55%)"></div><div style="position:absolute;left:82px;top:192px;width:8px;height:2px;background:linear-gradient(#9cdcfe 55%,transparent 55%)"></div><div style="position:absolute;left:90px;top:192px;width:2px;height:2px;background:linear-gradient(#ce9178 55%,transparent 55%)"></div><div style="position:absolute;left:48px;top:194px;width:1px;height:2px;background:linear-gradient(#179fff 55%,transparent 55%)"></div><div style="position:absolute;left:49px;top:194px;width:5px;height:2px;background:linear-gradient(#9cdcfe 55%,transparent 55%)"></div><div style="position:absolute;left:54px;top:194px;width:1px;height:2px;background:linear-gradient(#cccccc 55%,transparent 55%)"></div><div style="position:absolute;left:55px;top:194px;width:7px;height:2px;background:linear-gradient(#9cdcfe 55%,transparent 55%)"></div><div style="position:absolute;left:63px;top:194px;width:1px;height:2px;background:linear-gradient(#cccccc 55%,transparent 55%)"></div><div style="position:absolute;left:65px;top:194px;width:1px;height:2px;background:linear-gradient(#ce9178 55%,transparent 55%)"></div><div style="position:absolute;left:67px;top:194px;width:1px;height:2px;background:linear-gradient(#cccccc 55%,transparent 55%)"></div><div style="position:absolute;left:69px;top:194px;width:7px;height:2px;background:linear-gradient(#dcdcaa 55%,transparent 55%)"></div><div style="position:absolute;left:76px;top:194px;width:1px;height:2px;background:linear-gradient(#cccccc 55%,transparent 55%)"></div><div style="position:absolute;left:77px;top:194px;width:4px;height:2px;background:linear-gradient(#9cdcfe 55%,transparent 55%)"></div><div style="position:absolute;left:82px;top:194px;width:6px;height:2px;background:linear-gradient(#9cdcfe 55%,transparent 55%)"></div><div style="position:absolute;left:88px;top:194px;width:1px;height:2px;background:linear-gradient(#cccccc 55%,transparent 55%)"></div><div style="position:absolute;left:89px;top:194px;width:8px;height:2px;background:linear-gradient(#dcdcaa 55%,transparent 55%)"></div><div style="position:absolute;left:97px;top:194px;width:2px;height:2px;background:linear-gradient(#179fff 55%,transparent 55%)"></div><div style="position:absolute;left:100px;top:194px;width:1px;height:2px;background:linear-gradient(#cccccc 55%,transparent 55%)"></div><div style="position:absolute;left:102px;top:194px;width:3px;height:2px;background:linear-gradient(#dcdcaa 55%,transparent 55%)"></div><div style="position:absolute;left:44px;top:196px;width:2px;height:2px;background:linear-gradient(#cccccc 55%,transparent 55%)"></div><div style="position:absolute;left:46px;top:196px;width:2px;height:2px;background:linear-gradient(#569cd6 55%,transparent 55%)"></div><div style="position:absolute;left:44px;top:198px;width:1px;height:2px;background:linear-gradient(#cccccc 55%,transparent 55%)"></div><div style="position:absolute;left:45px;top:198px;width:2px;height:2px;background:linear-gradient(#569cd6 55%,transparent 55%)"></div><div style="position:absolute;left:48px;top:198px;width:9px;height:2px;background:linear-gradient(#9cdcfe 55%,transparent 55%)"></div><div style="position:absolute;left:57px;top:198px;width:1px;height:2px;background:linear-gradient(#cccccc 55%,transparent 55%)"></div><div style="position:absolute;left:58px;top:198px;width:7px;height:2px;background:linear-gradient(#ce9178 55%,transparent 55%)"></div><div style="position:absolute;left:66px;top:198px;width:5px;height:2px;background:linear-gradient(#ce9178 55%,transparent 55%)"></div><div style="position:absolute;left:72px;top:198px;width:9px;height:2px;background:linear-gradient(#ce9178 55%,transparent 55%)"></div><div style="position:absolute;left:82px;top:198px;width:8px;height:2px;background:linear-gradient(#9cdcfe 55%,transparent 55%)"></div><div style="position:absolute;left:90px;top:198px;width:2px;height:2px;background:linear-gradient(#ce9178 55%,transparent 55%)"></div><div style="position:absolute;left:52px;top:200px;width:1px;height:2px;background:linear-gradient(#179fff 55%,transparent 55%)"></div><div style="position:absolute;left:53px;top:200px;width:5px;height:2px;background:linear-gradient(#9cdcfe 55%,transparent 55%)"></div><div style="position:absolute;left:59px;top:200px;width:6px;height:2px;background:linear-gradient(#9cdcfe 55%,transparent 55%)"></div><div style="position:absolute;left:66px;top:200px;width:4px;height:2px;background:linear-gradient(#dcdcaa 55%,transparent 55%)"></div><div style="position:absolute;left:70px;top:200px;width:1px;height:2px;background:linear-gradient(#cccccc 55%,transparent 55%)"></div><div style="position:absolute;left:72px;top:200px;width:3px;height:2px;background:linear-gradient(#9cdcfe 55%,transparent 55%)"></div><div style="position:absolute;left:76px;top:200px;width:1px;height:2px;background:linear-gradient(#cccccc 55%,transparent 55%)"></div><div style="position:absolute;left:48px;top:202px;width:7px;height:2px;background:linear-gradient(#4ec9b0 55%,transparent 55%)"></div><div style="position:absolute;left:56px;top:202px;width:4px;height:2px;background:linear-gradient(#9cdcfe 55%,transparent 55%)"></div><div style="position:absolute;left:60px;top:202px;width:5px;height:2px;background:linear-gradient(#ce9178 55%,transparent 55%)"></div><div style="position:absolute;left:66px;top:202px;width:4px;height:2px;background:linear-gradient(#9cdcfe 55%,transparent 55%)"></div><div style="position:absolute;left:70px;top:202px;width:5px;height:2px;background:linear-gradient(#ce9178 55%,transparent 55%)"></div><div style="position:absolute;left:76px;top:202px;width:9px;height:2px;background:linear-gradient(#9cdcfe 55%,transparent 55%)"></div><div style="position:absolute;left:85px;top:202px;width:3px;height:2px;background:linear-gradient(#ce9178 55%,transparent 55%)"></div><div style="position:absolute;left:89px;top:202px;width:2px;height:2px;background:linear-gradient(#cccccc 55%,transparent 55%)"></div><div style="position:absolute;left:44px;top:204px;width:1px;height:2px;background:linear-gradient(#cccccc 55%,transparent 55%)"></div><div style="position:absolute;left:45px;top:204px;width:1px;height:2px;background:linear-gradient(#179fff 55%,transparent 55%)"></div><div style="position:absolute;left:40px;top:206px;width:2px;height:2px;background:linear-gradient(#cccccc 55%,transparent 55%)"></div><div style="position:absolute;left:42px;top:206px;width:3px;height:2px;background:linear-gradient(#569cd6 55%,transparent 55%)"></div><div style="position:absolute;left:45px;top:206px;width:1px;height:2px;background:linear-gradient(#cccccc 55%,transparent 55%)"></div><div style="position:absolute;left:36px;top:208px;width:2px;height:2px;background:linear-gradient(#cccccc 55%,transparent 55%)"></div><div style="position:absolute;left:38px;top:208px;width:3px;height:2px;background:linear-gradient(#569cd6 55%,transparent 55%)"></div><div style="position:absolute;left:41px;top:208px;width:1px;height:2px;background:linear-gradient(#cccccc 55%,transparent 55%)"></div><div style="position:absolute;left:32px;top:210px;width:2px;height:2px;background:linear-gradient(#cccccc 55%,transparent 55%)"></div><div style="position:absolute;left:34px;top:210px;width:3px;height:2px;background:linear-gradient(#569cd6 55%,transparent 55%)"></div><div style="position:absolute;left:37px;top:210px;width:1px;height:2px;background:linear-gradient(#cccccc 55%,transparent 55%)"></div><div style="position:absolute;left:28px;top:212px;width:2px;height:2px;background:linear-gradient(#cccccc 55%,transparent 55%)"></div><div style="position:absolute;left:30px;top:212px;width:3px;height:2px;background:linear-gradient(#569cd6 55%,transparent 55%)"></div><div style="position:absolute;left:33px;top:212px;width:1px;height:2px;background:linear-gradient(#cccccc 55%,transparent 55%)"></div><div style="position:absolute;left:24px;top:214px;width:2px;height:2px;background:linear-gradient(#cccccc 55%,transparent 55%)"></div><div style="position:absolute;left:26px;top:214px;width:3px;height:2px;background:linear-gradient(#569cd6 55%,transparent 55%)"></div><div style="position:absolute;left:29px;top:214px;width:1px;height:2px;background:linear-gradient(#cccccc 55%,transparent 55%)"></div><div style="position:absolute;left:20px;top:216px;width:2px;height:2px;background:linear-gradient(#cccccc 55%,transparent 55%)"></div><div style="position:absolute;left:22px;top:216px;width:3px;height:2px;background:linear-gradient(#569cd6 55%,transparent 55%)"></div><div style="position:absolute;left:25px;top:216px;width:1px;height:2px;background:linear-gradient(#cccccc 55%,transparent 55%)"></div><div style="position:absolute;left:20px;top:218px;width:1px;height:2px;background:linear-gradient(#179fff 55%,transparent 55%)"></div><div style="position:absolute;left:21px;top:218px;width:1px;height:2px;background:linear-gradient(#cccccc 55%,transparent 55%)"></div><div style="position:absolute;left:16px;top:220px;width:2px;height:2px;background:linear-gradient(#cccccc 55%,transparent 55%)"></div><div style="position:absolute;left:18px;top:220px;width:3px;height:2px;background:linear-gradient(#569cd6 55%,transparent 55%)"></div><div style="position:absolute;left:21px;top:220px;width:1px;height:2px;background:linear-gradient(#cccccc 55%,transparent 55%)"></div><div style="position:absolute;left:12px;top:222px;width:2px;height:2px;background:linear-gradient(#cccccc 55%,transparent 55%)"></div><div style="position:absolute;left:14px;top:222px;width:3px;height:2px;background:linear-gradient(#569cd6 55%,transparent 55%)"></div><div style="position:absolute;left:17px;top:222px;width:1px;height:2px;background:linear-gradient(#cccccc 55%,transparent 55%)"></div><div style="position:absolute;left:8px;top:224px;width:2px;height:2px;background:linear-gradient(#cccccc 55%,transparent 55%)"></div><div style="position:absolute;left:10px;top:224px;width:3px;height:2px;background:linear-gradient(#569cd6 55%,transparent 55%)"></div><div style="position:absolute;left:13px;top:224px;width:1px;height:2px;background:linear-gradient(#cccccc 55%,transparent 55%)"></div><div style="position:absolute;left:4px;top:226px;width:1px;height:2px;background:linear-gradient(#da70d6 55%,transparent 55%)"></div><div style="position:absolute;left:0px;top:228px;width:1px;height:2px;background:linear-gradient(#ffd700 55%,transparent 55%)"></div></div><div class="a" style="left:990px;top:22px;width:2px;height:614px;background:#232323"></div><div class="a" style="left:1113px;top:22px;width:1px;height:614px;background:#0f0f0f"></div><div class="a" style="left:1114px;top:22px;width:13px;height:134px;background:rgba(90,100,112,0.12)"></div><div class="a" style="left:1114px;top:183px;width:13px;height:2px;background:#a0a0a0"></div><div class="a" style="left:68px;top:624px;width:856px;height:12px;background:rgba(90,100,112,0.12)"></div></div><div class="a" style="left:0;top:706px;width:1366px;height:22px;background:#181818;border-top:1px solid #2b2b2b"><div class="a" style="left:0;top:-1px;width:34px;height:22px;background:#0078d4"></div><svg style="left:10px;top:3px" width="14" height="16" viewBox="0 0 14 16"><path d="M2.4 6 L7.3 9.4 L2.4 12.8 M12 1 L6.1 4.7 L12 8.4" stroke="#ffffff" stroke-width="1.2" fill="none"/></svg><svg style="left:41px;top:3px" width="12" height="16" viewBox="0 0 12 16"><circle cx="2.5" cy="2.8" r="1.8" stroke="#cccccc" stroke-width="1" fill="none"/><circle cx="2.5" cy="13.2" r="1.8" stroke="#cccccc" stroke-width="1" fill="none"/><circle cx="9.5" cy="5" r="1.8" stroke="#cccccc" stroke-width="1" fill="none"/><path d="M2.5 4.6 V11.4 M9.5 6.8 Q9.5 9.5 6 9.8 Q2.8 10 2.5 11.4" stroke="#cccccc" stroke-width="1" fill="none"/></svg><div style="position:absolute;left:57.80px;top:4px;font-size:12px;color:#cccccc;font-weight:normal;white-space:nowrap;transform-origin:0 0;transform:scaleX(0.9670);">master*</div><svg style="left:104.5px;top:6px" width="14" height="10" viewBox="0 0 14 10"><path d="M4 9 H3.2 Q0.7 9 0.7 6.5 Q0.7 4.4 2.9 4.1 Q3.5 0.7 7 0.7 Q10.5 0.7 11.1 4.1 Q13.3 4.4 13.3 6.5 Q13.3 9 10.8 9 H10" stroke="#cccccc" stroke-width="1" fill="none"/><path d="M7 10 V5 M5.2 6.8 L7 5 L8.8 6.8" stroke="#cccccc" stroke-width="1" fill="none"/></svg><svg style="left:133px;top:4px" width="13" height="13" viewBox="0 0 13 13"><circle cx="6.5" cy="6.5" r="5.8" stroke="#cccccc" stroke-width="1.1" fill="none"/><path d="M4 4 L9 9 M9 4 L4 9" stroke="#cccccc" stroke-width="1.1"/></svg><div style="position:absolute;left:149.60px;top:4px;font-size:12px;color:#cccccc;font-weight:normal;white-space:nowrap;transform-origin:0 0;transform:scaleX(0.9714);">0</div><svg style="left:160px;top:4px" width="14" height="13" viewBox="0 0 14 13"><path d="M7 0.8 L13.3 12.3 H0.7 Z" stroke="#cccccc" stroke-width="1.1" fill="none" stroke-linejoin="round"/><path d="M7 4.5 V8.5 M7 9.8 V11" stroke="#cccccc" stroke-width="1.1"/></svg><div style="position:absolute;left:176.40px;top:4px;font-size:12px;color:#cccccc;font-weight:normal;white-space:nowrap;transform-origin:0 0;transform:scaleX(0.9857);">0</div><div style="position:absolute;left:984.50px;top:4px;font-size:12px;color:#cccccc;font-weight:normal;white-space:nowrap;transform-origin:0 0;transform:scaleX(0.9404);">Ln 40, Col 11</div><div style="position:absolute;left:1068.00px;top:4px;font-size:12px;color:#cccccc;font-weight:normal;white-space:nowrap;transform-origin:0 0;transform:scaleX(0.9070);">Spaces: 4</div><div style="position:absolute;left:1133.10px;top:4px;font-size:12px;color:#cccccc;font-weight:normal;white-space:nowrap;transform-origin:0 0;transform:scaleX(0.9090);">UTF-8</div><div style="position:absolute;left:1180.60px;top:4px;font-size:12px;color:#cccccc;font-weight:normal;white-space:nowrap;transform-origin:0 0;transform:scaleX(0.8418);">CRLF</div><div style="position:absolute;left:1222.40px;top:5px;font-size:11px;color:#cccccc;font-weight:normal;white-space:nowrap;transform-origin:0 0;transform:scaleX(1.0438);">{ }</div><div style="position:absolute;left:1240.70px;top:4px;font-size:12px;color:#cccccc;font-weight:normal;white-space:nowrap;transform-origin:0 0;transform:scaleX(0.9155);">JavaScript</div><svg style="left:1307px;top:4px" width="15" height="14" viewBox="0 0 15 14"><circle cx="5" cy="5" r="2.6" stroke="#cccccc" stroke-width="1" fill="none"/><path d="M0.8 13.3 Q1.5 8.6 5 8.6 Q7 8.6 8 10 M7.5 1 H14 V7 H11.5 L9.5 9 V7 H9" stroke="#cccccc" stroke-width="1" fill="none"/></svg><svg style="left:1337px;top:3px" width="14" height="15" viewBox="0 0 14 15"><path d="M2.5 11 V6.5 Q2.5 1.8 7 1.8 Q11.5 1.8 11.5 6.5 V11 L12.8 12.3 H1.2 Z M5.3 13.5 Q7 15 8.7 13.5" stroke="#cccccc" stroke-width="1" fill="none" stroke-linejoin="round"/></svg></div></body></html>
